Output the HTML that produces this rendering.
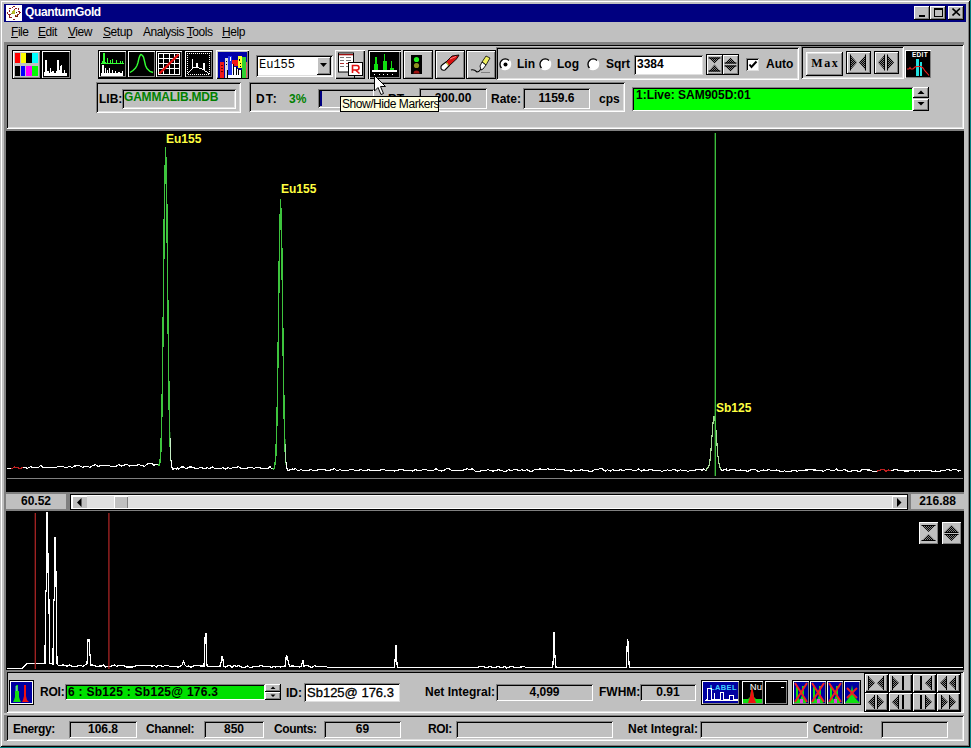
<!DOCTYPE html><html><head><meta charset="utf-8"><style>
*{margin:0;padding:0;box-sizing:border-box}
html,body{width:971px;height:748px;overflow:hidden;background:#008080}
body{position:relative;font-family:"Liberation Sans",sans-serif;font-size:12px;color:#000}
div{position:absolute;white-space:nowrap}
svg{position:absolute;display:block}
.raised{background:#c0c0c0;box-shadow:inset -1px -1px #000,inset 1px 1px #fff,inset -2px -2px #808080,inset 2px 2px #dfdfdf}
.raised1{background:#c0c0c0;box-shadow:inset -1px -1px #000,inset 1px 1px #fff,inset -2px -2px #808080}
.sunken{box-shadow:inset 1px 1px #808080,inset -1px -1px #fff,inset 2px 2px #000,inset -2px -2px #dfdfdf}
.thin{box-shadow:inset 1px 1px #808080,inset -1px -1px #fff}
.groove{box-shadow:inset 1px 1px #808080,inset -1px -1px #fff}
.b{font-weight:bold}
.lbl{font-weight:bold;font-size:12px;line-height:14px}
</style></head><body>
<div style="left:0px;top:0px;width:970px;height:747px;background:#c0c0c0;box-shadow:inset 1px 1px #c0c0c0,inset -1px -1px #000,inset 2px 2px #fff,inset -2px -2px #808080"></div>
<div style="left:4px;top:4px;width:962px;height:18px;background:#000080"></div>
<svg style="left:6px;top:5px" width="16" height="16" viewBox="0 0 16 16" shape-rendering="crispEdges"><rect width="16" height="16" fill="#fff"/><rect x="7" y="1" width="2" height="1" fill="#902020"/><rect x="6" y="2" width="1" height="1" fill="#902020"/><rect x="3" y="3" width="2" height="1" fill="#902020"/><rect x="9" y="3" width="2" height="1" fill="#902020"/><rect x="12" y="3" width="1" height="2" fill="#902020"/><rect x="3" y="5" width="1" height="2" fill="#902020"/><rect x="8" y="4" width="1" height="1" fill="#902020"/><rect x="7" y="5" width="1" height="1" fill="#902020"/><rect x="12" y="6" width="2" height="1" fill="#902020"/><rect x="13" y="7" width="2" height="1" fill="#902020"/><rect x="1" y="7" width="1" height="2" fill="#902020"/><rect x="10" y="7" width="1" height="1" fill="#301010"/><rect x="5" y="8" width="1" height="1" fill="#902020"/><rect x="13" y="8" width="1" height="1" fill="#902020"/><rect x="2" y="9" width="3" height="1" fill="#902020"/><rect x="11" y="9" width="2" height="1" fill="#902020"/><rect x="3" y="10" width="1" height="2" fill="#902020"/><rect x="3" y="12" width="3" height="1" fill="#902020"/><rect x="7" y="14" width="2" height="1" fill="#902020"/><rect x="6" y="6" width="3" height="3" fill="#b8c028"/><rect x="7" y="5" width="2" height="1" fill="#c8b840"/><rect x="5" y="8" width="2" height="1" fill="#90a030"/><rect x="9" y="10" width="3" height="2" fill="#702010"/><rect x="10" y="10" width="1" height="1" fill="#e0c040"/></svg>
<div style="left:25px;top:4px;color:#fff;font-weight:bold;font-size:12px;line-height:16px;letter-spacing:-0.38px">QuantumGold</div>
<div class="raised1" style="left:914px;top:6px;width:16px;height:14px;"></div>
<div class="raised1" style="left:930px;top:6px;width:16px;height:14px;"></div>
<div class="raised1" style="left:948px;top:6px;width:16px;height:14px;"></div>
<div style="left:919px;top:15px;width:6px;height:2px;background:#000"></div>
<div style="left:934px;top:8px;width:9px;height:9px;border:1px solid #000;border-top-width:2px"></div>
<svg style="left:952px;top:8px" width="9" height="8" viewBox="0 0 9 8"><path d="M0.5 0.5 L8 7.5 M8 0.5 L0.5 7.5" stroke="#000" stroke-width="1.6"/></svg>
<div style="left:11px;top:25px;font-size:12px;line-height:15px;letter-spacing:-0.45px"><u>F</u>ile</div>
<div style="left:38px;top:25px;font-size:12px;line-height:15px;letter-spacing:-0.45px"><u>E</u>dit</div>
<div style="left:68px;top:25px;font-size:12px;line-height:15px;letter-spacing:-0.45px"><u>V</u>iew</div>
<div style="left:103px;top:25px;font-size:12px;line-height:15px;letter-spacing:-0.45px"><u>S</u>etup</div>
<div style="left:143px;top:25px;font-size:12px;line-height:15px;letter-spacing:-0.45px">Analysis <u>T</u>ools</div>
<div style="left:222px;top:25px;font-size:12px;line-height:15px;letter-spacing:-0.45px"><u>H</u>elp</div>
<div style="left:4px;top:42px;width:960px;height:87px;box-shadow:inset 3px 3px #808080,inset -1px -1px #fff,inset 4px 4px #000,inset -2px -2px #dfdfdf"></div>
<div style="left:4px;top:129px;width:960px;height:364px;background:#000;box-shadow:inset 2px 2px #808080"></div>
<div style="left:4px;top:492px;width:960px;height:19px;background:#808080"></div>
<div style="left:6px;top:494px;width:60px;height:15px;background:#c0c0c0"></div>
<div style="left:6px;top:494px;width:60px;text-align:center;font-weight:bold;font-size:12px;line-height:15px">60.52</div>
<div style="left:70px;top:494px;width:838px;height:16px;background:#000"></div>
<div style="left:71px;top:495px;width:836px;height:14px;background:#fff"></div>
<div style="left:72px;top:496px;width:834px;height:12px;background:#e0e0e0"></div>
<div style="left:72px;top:496px;width:15px;height:12px;background:#c0c0c0;box-shadow:inset 1px 1px #fff"></div>
<div style="left:114px;top:496px;width:14px;height:12px;background:#c0c0c0;box-shadow:inset 1px 1px #fff,inset -1px 0 #808080"></div>
<div style="left:892px;top:496px;width:15px;height:12px;background:#c0c0c0;box-shadow:inset 1px 1px #fff"></div>
<svg style="left:77px;top:498px" width="5" height="9"><path d="M4.5 0 L0 4.5 L4.5 9Z" fill="#000"/></svg>
<svg style="left:897px;top:498px" width="5" height="9"><path d="M0 0 L4.5 4.5 L0 9Z" fill="#000"/></svg>
<div style="left:911px;top:494px;width:53px;height:15px;background:#c0c0c0"></div>
<div style="left:911px;top:494px;width:53px;text-align:center;font-weight:bold;font-size:12px;line-height:15px">216.88</div>
<div style="left:4px;top:510px;width:960px;height:160px;background:#000;box-shadow:inset 0 1px #808080,inset 2px 0 #808080"></div>
<div style="left:4px;top:670px;width:960px;height:43px;box-shadow:inset 3px 2px #808080,inset -1px -1px #fff,inset 4px 3px #000,inset -2px -2px #dfdfdf"></div>
<div style="left:4px;top:715px;width:960px;height:26px;box-shadow:inset 3px 1px #808080,inset -1px -1px #fff,inset 4px 2px #000,inset -2px -2px #dfdfdf"></div>
<svg width="0" height="0" style="left:0;top:0"><defs><pattern id="dotw" width="2" height="2" patternUnits="userSpaceOnUse"><rect width="1" height="1" fill="#fff"/><rect x="1" y="1" width="1" height="1" fill="#fff"/></pattern><pattern id="dith" width="2" height="2" patternUnits="userSpaceOnUse"><rect width="2" height="2" fill="#808080"/><rect width="1" height="1" fill="#000"/><rect x="1" y="1" width="1" height="1" fill="#000"/></pattern></defs></svg>
<div style="left:12px;top:50px;width:59px;height:29px;background:#000"></div>
<div style="left:13px;top:51px;width:27px;height:27px;background:#c0c0c0;box-shadow:inset 1px 1px #fff,inset -1px -1px #808080"></div>
<svg style="left:13px;top:51px" width="27" height="27" viewBox="0 0 27 27"><g shape-rendering="crispEdges"><rect x="2" y="2" width="5" height="10" fill="#f00"/><rect x="8" y="2" width="5" height="10" fill="#ff0"/><rect x="13" y="2" width="6" height="10" fill="#000"/><rect x="19" y="2" width="6" height="10" fill="#0ff"/><rect x="2" y="15" width="5" height="10" fill="#000"/><rect x="8" y="15" width="4" height="10" fill="#00f"/><rect x="13" y="15" width="6" height="10" fill="#f0f"/><rect x="19" y="15" width="6" height="10" fill="#0f0"/></g></svg>
<div style="left:42px;top:51px;width:28px;height:27px;background:#000;box-shadow:inset 1px 1px #fff,inset -1px -1px #808080"></div>
<svg style="left:42px;top:51px" width="28" height="27" viewBox="0 0 28 27"><path shape-rendering="crispEdges" d="M2 25 V21 H3 V9 H5 V20 H7 V22 H8 V17 H9 V21 H10 V20 H12 V22 H14 V20 H15 V9 H17 V19 H18 V15 H19 V14 H20 V22 H22 V19 H23 V22 H25 V25Z" fill="#fff"/></svg>
<div style="left:98px;top:50px;width:115px;height:29px;background:#000"></div>
<div style="left:99px;top:51px;width:27px;height:26px;background:#000;box-shadow:inset 1px 1px #fff,inset -1px -1px #808080"></div>
<svg style="left:99px;top:51px" width="27" height="26" viewBox="0 0 27 26"><g shape-rendering="crispEdges"><rect x="2" y="12" width="23" height="1" fill="#3f3"/><path d="M3 12 V10 H4 V2 H6 V11 H7 V12 M8 12 V7 H9 V12 M11 12 V9 H12 V12 M13 12 V8 H14 V12 M17 12 V9 H18 V12 M21 12 V10 H22 V12 M23 12 V10 H24 V12Z" fill="#3f3"/><path d="M2 25 V22 H3 V14 H5 V22 H6 V17 H7 V22 H8 V19 H9 V22 H10 V17 H11 V22 H13 V19 H14 V22 H16 V20 H17 V22 H19 V21 H21 V22 H23 V20 H24 V25Z" fill="#fff"/></g></svg>
<div style="left:128px;top:51px;width:27px;height:26px;background:#000;box-shadow:inset 1px 1px #fff,inset -1px -1px #808080"></div>
<svg style="left:128px;top:51px" width="27" height="26" viewBox="0 0 27 26"><polyline fill="none" stroke="#3f3" stroke-width="1.4" points="2,21.5 5,19.5 7.5,17 9,14.5 10,11.5 11,7 12,4.5 13,3.5 14.5,4.5 15.5,6 16.5,10 17.5,14.5 19,17.5 22,20.5 25,21.5"/></svg>
<div style="left:156px;top:51px;width:26px;height:26px;background:#000;box-shadow:inset 1px 1px #fff,inset -1px -1px #808080"></div>
<svg style="left:156px;top:51px" width="26" height="26" viewBox="0 0 26 26"><g shape-rendering="crispEdges"><rect x="2" y="2" width="1" height="22" fill="#fff"/><rect x="7" y="2" width="1" height="22" fill="#fff"/><rect x="13" y="2" width="1" height="22" fill="#fff"/><rect x="18" y="2" width="1" height="22" fill="#fff"/><rect x="23" y="2" width="1" height="22" fill="#fff"/><rect x="2" y="2" width="22" height="1" fill="#fff"/><rect x="2" y="7" width="22" height="1" fill="#fff"/><rect x="2" y="12" width="22" height="1" fill="#fff"/><rect x="2" y="17" width="22" height="1" fill="#fff"/><rect x="2" y="23" width="22" height="1" fill="#fff"/></g><path d="M3.5 22.5 L22.5 3.5" stroke="#e01010" stroke-width="2.4"/></svg>
<div style="left:185px;top:51px;width:27px;height:26px;background:#000;box-shadow:inset 1px 1px #fff,inset -1px -1px #808080"></div>
<svg style="left:185px;top:51px" width="27" height="26" viewBox="0 0 27 26"><g shape-rendering="crispEdges"><rect x="2" y="2" width="23" height="1" fill="url(#dotw)"/><rect x="2" y="23" width="23" height="1" fill="url(#dotw)"/><rect x="2" y="2" width="1" height="22" fill="url(#dotw)"/><rect x="24" y="2" width="1" height="22" fill="url(#dotw)"/><polyline fill="none" stroke="#fff" stroke-width="1" points="2.5,22.5 5.5,19.5 7.5,17.5 7.5,7.5 7.5,16.5 11.5,16.5 11.5,12.5 12.5,12.5 12.5,16.5 15.5,17.5 18.5,18.5 18.5,12.5 19.5,12.5 19.5,19.5 22.5,21.5 24.5,23.5"/></g></svg>
<div style="left:216px;top:50px;width:33px;height:29px;background:#c0c0c0;box-shadow:inset 1px 1px #fff,inset -1px -1px #000,inset -2px -2px #808080"></div>
<svg style="left:218px;top:52px" width="29" height="26" viewBox="0 0 29 26" shape-rendering="crispEdges"><rect width="29" height="26" fill="#0000a8"/><rect x="2" y="10" width="4" height="16" fill="#f01818"/><path d="M3 13 H5 M3 16 H5 M3 19 H5" stroke="#600" stroke-width="1"/><rect x="7" y="6" width="3" height="20" fill="#d8d8d8"/><rect x="8" y="9" width="1" height="1" fill="#000"/><rect x="8" y="12" width="1" height="1" fill="#000"/><rect x="10" y="4" width="4" height="20" fill="#2030e8"/><rect x="12" y="5" width="1" height="4" fill="#fff"/><rect x="14" y="8" width="6" height="6" fill="#f01818"/><rect x="20" y="4" width="4" height="12" fill="#ffff30"/><rect x="21" y="7" width="1" height="2" fill="#000"/><rect x="22" y="11" width="1" height="1" fill="#000"/><rect x="22" y="14" width="1" height="1" fill="#000"/><rect x="24" y="5" width="4" height="21" fill="#30d030"/><rect x="28" y="10" width="1" height="16" fill="#e06060"/><path d="M9 26 V18 H10 V23 H14 V12 H15 V23 H16 V15 H18 V23 H19 V17 H20 V23 H21 V18 H23 V26Z" fill="#fff"/><path d="M9.5 18 V26 M15.5 12 V23 M18.5 15 V23 M20.5 17 V23 M23.5 18 V26" stroke="#000" stroke-width="1"/></svg>
<div style="left:256px;top:55px;width:77px;height:22px;background:#fff;box-shadow:inset 1px 1px #808080,inset -1px -1px #fff,inset 2px 2px #000,inset -2px -2px #dfdfdf"></div>
<div style="left:259px;top:58px;font-family:&quot;Liberation Mono&quot;,monospace;font-size:12px;line-height:14px;letter-spacing:0px">Eu155</div>
<div class="raised1" style="left:317px;top:57px;width:14px;height:18px;"></div>
<svg style="left:320px;top:63px" width="8" height="5"><path d="M0 0 H7 L3.5 4Z" fill="#000"/></svg>
<div style="left:335px;top:50px;width:30px;height:29px;background:#c0c0c0;box-shadow:inset 1px 1px #fff,inset -1px -1px #000,inset -2px -2px #808080"></div>
<svg style="left:337px;top:52px" width="27" height="26" viewBox="0 0 27 26"><rect x="1" y="0.5" width="16" height="20" fill="#000"/><rect x="2" y="1.5" width="14" height="18" fill="#fff"/><rect x="2" y="2" width="14" height="1.3" fill="#a01010"/><path d="M3 5.5 H7 M9 5.5 H14 M3 8.5 H7 M9 8.5 H14 M3 14.5 H7 M9 14.5 H14" stroke="#7a7a7a" stroke-width="1"/><path d="M3 11.5 H7 M9 11.5 H14" stroke="#b03030" stroke-width="1"/><rect x="11" y="10" width="15" height="14" fill="#000"/><rect x="12" y="11" width="13" height="12" fill="#fff"/><path d="M15.5 21 V13.5 H20 Q22 13.5 22 15.8 Q22 18 20 18 H16 M18.5 18 L22.5 21.5" fill="none" stroke="#e01010" stroke-width="1.6"/><path d="M17.5 24 V26" stroke="#000" stroke-width="1"/></svg>
<div style="left:368px;top:50px;width:33px;height:29px;background:#000;box-shadow:inset 1px 1px #000,inset 2px 2px #fff,inset -1px -1px #000,inset -2px -2px #808080"></div>
<svg style="left:370px;top:52px" width="29" height="25" viewBox="0 0 29 25" shape-rendering="crispEdges"><path d="M4 19 V12 H5 V5 H7 V12 H8 V19Z M13 19 V9 H14 V2 H15 V9 H17 V19Z M20 19 V16 H21 V9 H22 V16 H24 V19Z" fill="#10e010"/><rect x="2" y="18" width="25" height="2" fill="#fff"/><path d="M4 22.5 H5 M9 22.5 H10 M13 22.5 H14 M17 22.5 H18 M22 22.5 H23" stroke="#fff" stroke-width="1"/></svg>
<div style="left:403px;top:50px;width:30px;height:29px;background:#c0c0c0;box-shadow:inset 1px 1px #000,inset -1px -1px #000,inset 2px 2px #fff,inset -2px -2px #808080"></div>
<svg style="left:405px;top:52px" width="26" height="25" viewBox="0 0 26 25"><rect x="6" y="3" width="11" height="19" fill="#000"/><circle cx="11.5" cy="7.5" r="2.6" fill="#20f020"/><circle cx="11.5" cy="13.5" r="2.6" fill="#909020"/><path d="M8.5 21.5 A3 3 0 0 1 14.5 21.5Z" fill="#a01010"/></svg>
<div style="left:435px;top:50px;width:30px;height:29px;background:#c0c0c0;box-shadow:inset 1px 1px #000,inset -1px -1px #000,inset 2px 2px #fff,inset -2px -2px #808080"></div>
<svg style="left:437px;top:52px" width="26" height="25" viewBox="0 0 26 25"><path d="M9 10 L15 4 L22 3 L20 6.5 L12 14Z" fill="#d81010" stroke="#000" stroke-width="0.9"/><path d="M13 7 L19 4.5" stroke="#ff9090" stroke-width="0.9"/><path d="M9 10 L12 14 L8 18 Q5 19 4 16.5 Q3.5 14 5 13Z" fill="#fff" stroke="#000" stroke-width="1.1"/><path d="M9.5 10.5 L11.5 13.5" stroke="#e8e040" stroke-width="1.2"/></svg>
<div style="left:466px;top:50px;width:30px;height:29px;background:#c0c0c0;box-shadow:inset 1px 1px #000,inset -1px -1px #000,inset 2px 2px #fff,inset -2px -2px #808080"></div>
<svg style="left:468px;top:52px" width="26" height="25" viewBox="0 0 26 25"><path d="M14 10 L18 4 L22 6 L18 13 Z" fill="#f0f060" stroke="#000" stroke-width="0.8"/><path d="M12 14 L14 10 L18 13 L15 17 L13 18Z" fill="#fff" stroke="#000" stroke-width="0.9"/><path d="M3 18 Q6 17 9 20 Q11 20 13 17" fill="none" stroke="#000" stroke-width="1.1"/><path d="M13 20.5 H22" stroke="#808080" stroke-width="1"/></svg>
<div style="left:496px;top:47px;width:303px;height:33px;box-shadow:inset 1px 1px #808080,inset -1px -1px #fff,inset 2px 2px #000,inset -2px -2px #dfdfdf"></div>
<svg style="left:499px;top:58px" width="13" height="13" viewBox="0 0 13 13"><circle cx="6.5" cy="6.5" r="5" fill="#fff"/><path d="M2.3 10.2 A5.6 5.6 0 0 0 10.2 2.3" stroke="#fff" fill="none" stroke-width="1.4"/><path d="M2.5 10 A5 5 0 0 1 10 2.5" stroke="#000" fill="none" stroke-width="1.3"/><circle cx="6.5" cy="6.5" r="2" fill="#000"/></svg>
<svg style="left:539px;top:58px" width="13" height="13" viewBox="0 0 13 13"><circle cx="6.5" cy="6.5" r="5" fill="#fff"/><path d="M2.3 10.2 A5.6 5.6 0 0 0 10.2 2.3" stroke="#fff" fill="none" stroke-width="1.4"/><path d="M2.5 10 A5 5 0 0 1 10 2.5" stroke="#000" fill="none" stroke-width="1.3"/></svg>
<svg style="left:587px;top:58px" width="13" height="13" viewBox="0 0 13 13"><circle cx="6.5" cy="6.5" r="5" fill="#fff"/><path d="M2.3 10.2 A5.6 5.6 0 0 0 10.2 2.3" stroke="#fff" fill="none" stroke-width="1.4"/><path d="M2.5 10 A5 5 0 0 1 10 2.5" stroke="#000" fill="none" stroke-width="1.3"/></svg>
<div style="left:517px;top:56px;font-weight:bold;font-size:12px;line-height:16px">Lin</div>
<div style="left:557px;top:56px;font-weight:bold;font-size:12px;line-height:16px">Log</div>
<div style="left:606px;top:56px;font-weight:bold;font-size:12px;line-height:16px">Sqrt</div>
<div style="left:634px;top:55px;width:69px;height:20px;background:#fff;box-shadow:inset 1px 1px #808080,inset -1px -1px #dfdfdf,inset 2px 2px #000"></div>
<div style="left:637px;top:56px;font-weight:bold;font-size:12px;line-height:16px">3384</div>
<div style="left:706px;top:54px;width:33px;height:21px;background:#000"></div>
<div style="left:707px;top:55px;width:15px;height:19px;background:#c0c0c0;box-shadow:inset 1px 1px #fff,inset -1px -1px #808080"></div>
<div style="left:723px;top:55px;width:15px;height:19px;background:#c0c0c0;box-shadow:inset 1px 1px #fff,inset -1px -1px #808080"></div>
<svg style="left:707px;top:55px" width="32" height="19" viewBox="0 0 32 19"><path d="M1.5 2.5 H13.5 L7.5 8.5Z M7.5 9.5 L13.5 16.5 H1.5Z" fill="url(#dith)"/><path d="M1.5 3 H13.5 M1.5 16 H13.5" stroke="#000"/><path d="M17.5 8.5 L23.5 2.5 L29.5 8.5Z M17.5 10.5 H29.5 L23.5 16.5Z" fill="url(#dith)"/><path d="M17.5 8 H29.5 M17.5 11 H29.5" stroke="#000"/></svg>
<div style="left:746px;top:58px;width:13px;height:13px;background:#fff;box-shadow:inset 1px 1px #808080,inset -1px -1px #dfdfdf,inset 2px 2px #000"></div>
<svg style="left:748px;top:60px" width="10" height="10"><path d="M1.5 4.5 L3.5 7 L8.5 1.5" fill="none" stroke="#000" stroke-width="2"/></svg>
<div style="left:766px;top:56px;font-weight:bold;font-size:12px;line-height:16px">Auto</div>
<div style="left:801px;top:46px;width:103px;height:33px;box-shadow:inset 1px 1px #808080,inset -1px -1px #fff,inset 2px 2px #000,inset -2px -2px #dfdfdf"></div>
<div class="raised" style="left:806px;top:52px;width:37px;height:24px;"></div>
<div style="left:806px;top:55px;width:37px;text-align:center;font-family:&quot;Liberation Serif&quot;,serif;font-weight:bold;font-size:12px;line-height:16px;letter-spacing:1.6px;text-indent:1.6px">Max</div>
<div style="left:846px;top:51px;width:25px;height:23px;background:#c0c0c0;box-shadow:inset 1px 1px #000,inset -1px -1px #000,inset 2px 2px #fff,inset -2px -2px #808080"></div>
<div style="left:874px;top:51px;width:25px;height:23px;background:#c0c0c0;box-shadow:inset 1px 1px #000,inset -1px -1px #000,inset 2px 2px #fff,inset -2px -2px #808080"></div>
<svg style="left:846px;top:51px" width="53" height="23" viewBox="0 0 53 23"><path d="M4 3.5 L11 11.5 L4 19.5Z M20 3.5 L13 11.5 L20 19.5Z" fill="url(#dith)"/><path d="M4.5 3.5 V19.5 M19.5 3.5 V19.5" stroke="#000"/><path d="M39 3.5 L32 11.5 L39 19.5Z M41 3.5 L48 11.5 L41 19.5Z" fill="url(#dith)"/><path d="M38.5 3.5 V19.5 M41.5 3.5 V19.5" stroke="#000"/></svg>
<div style="left:905px;top:50px;width:26px;height:28px;background:#000;box-shadow:inset 1px 1px #fff,inset -1px -1px #808080"></div>
<svg style="left:905px;top:50px" width="26" height="28" viewBox="0 0 26 28"><text x="23" y="7" text-anchor="end" font-family="Liberation Sans" font-weight="bold" font-size="6.5" fill="#fff" letter-spacing="0.3">EDIT</text><rect x="11" y="9" width="3" height="17" fill="#20e0e0"/><rect x="15" y="12" width="2" height="14" fill="#20e0e0"/><polyline fill="none" stroke="#f02020" stroke-width="1.1" points="2,19 4,19 5,17.5 6,19 8,19 10,17 12,16.5 16,16.5 18,18 20,21 22,23 24,25.5"/></svg>
<div style="left:96px;top:82px;width:145px;height:31px;box-shadow:inset 1px 1px #808080,inset -1px -1px #fff,inset 2px 2px #000,inset -2px -2px #dfdfdf"></div>
<div style="left:99px;top:92px;font-weight:bold;font-size:12px;line-height:15px">LIB:</div>
<div style="left:122px;top:89px;width:114px;height:20px;box-shadow:inset 1px 1px #808080,inset -1px -1px #fff,inset 2px 2px #000,inset -2px -2px #dfdfdf"></div>
<div style="left:124px;top:90px;color:#008000;font-weight:bold;font-size:12px;line-height:15px;letter-spacing:-0.2px">GAMMALIB.MDB</div>
<div style="left:249px;top:82px;width:376px;height:30px;box-shadow:inset 1px 1px #808080,inset -1px -1px #fff,inset 2px 2px #000,inset -2px -2px #dfdfdf"></div>
<div style="left:256px;top:92px;font-weight:bold;font-size:12px;line-height:15px;letter-spacing:1px">DT:</div>
<div style="left:289px;top:92px;color:#008000;font-weight:bold;font-size:12px;line-height:15px">3%</div>
<div style="left:318px;top:89px;width:56px;height:19px;box-shadow:inset 1px 1px #808080,inset -1px -1px #fff,inset 2px 2px #000"></div>
<div style="left:320px;top:91px;width:2px;height:15px;background:#000080"></div>
<div style="left:388px;top:92px;font-weight:bold;font-size:12px;line-height:15px">RT:</div>
<div style="left:419px;top:88px;width:68px;height:21px;box-shadow:inset 1px 1px #808080,inset -1px -1px #fff,inset 2px 2px #000"></div>
<div style="left:419px;top:90px;width:68px;text-align:center;font-weight:bold;font-size:12px;line-height:16px">200.00</div>
<div style="left:491px;top:92px;font-weight:bold;font-size:12px;line-height:15px">Rate:</div>
<div style="left:523px;top:88px;width:67px;height:21px;box-shadow:inset 1px 1px #808080,inset -1px -1px #fff,inset 2px 2px #000"></div>
<div style="left:523px;top:90px;width:67px;text-align:center;font-weight:bold;font-size:12px;line-height:16px">1159.6</div>
<div style="left:599px;top:92px;font-weight:bold;font-size:12px;line-height:15px">cps</div>
<div style="left:632px;top:87px;width:281px;height:24px;background:#00ff00;box-shadow:inset 1px 1px #808080,inset -1px -1px #fff,inset 2px 2px #000"></div>
<div style="left:636px;top:88px;font-weight:bold;font-size:12px;line-height:14px">1:Live: SAM905D:01</div>
<div class="raised1" style="left:913px;top:87px;width:16px;height:11px;"></div>
<div class="raised1" style="left:913px;top:99px;width:16px;height:12px;"></div>
<svg style="left:917px;top:90px" width="8" height="20"><path d="M0.5 4 H7.5 L4 0.5Z M0.5 12 H7.5 L4 15.5Z" fill="#000"/></svg>
<div style="left:340px;top:96px;width:99px;height:16px;background:#ffffe1;border:1px solid #000"></div>
<div style="left:342px;top:97px;font-size:12px;line-height:14px;letter-spacing:-0.45px">Show/Hide Markers</div>
<svg style="left:374px;top:75px" width="14" height="22" viewBox="0 0 14 22"><path d="M0.5 0.5 V16 L4 12.5 L7 19.5 L9.5 18.5 L6.5 11.5 H11.5Z" fill="#fff" stroke="#000" stroke-width="1"/></svg>
<svg style="left:0;top:0" width="971" height="748" viewBox="0 0 971 748" shape-rendering="crispEdges">
<path d="M7 478.5 H963" stroke="#808080" stroke-width="1.2"/>
<defs><clipPath id="c1"><rect x="158" y="131" width="12.3" height="350"/></clipPath><clipPath id="c2"><rect x="272.5" y="131" width="13" height="350"/></clipPath><clipPath id="c3"><rect x="706" y="131" width="15" height="350"/></clipPath><clipPath id="r1"><rect x="11" y="131" width="12" height="350"/></clipPath><clipPath id="r2"><rect x="877" y="131" width="14" height="350"/></clipPath></defs>
<polyline fill="none" stroke="#ffffff" stroke-width="1.1" points="7.0,468.5 9.6,468.5 12.2,468.5 14.8,467.0 17.4,467.8 20.0,468.3 22.6,467.7 25.2,467.7 27.8,468.2 30.4,466.7 33.0,467.6 35.6,467.5 38.2,467.5 40.8,465.6 43.4,467.9 46.0,467.4 48.6,467.3 51.2,467.3 53.8,467.2 56.4,467.2 59.0,466.2 61.6,466.2 64.2,467.1 66.8,467.6 69.4,466.1 72.0,467.5 74.6,466.0 77.2,465.9 79.8,465.9 82.4,467.3 85.0,466.7 87.6,466.7 90.2,467.2 92.8,465.7 95.4,464.7 98.0,466.5 100.6,465.6 103.2,465.5 105.8,465.5 108.4,465.4 111.0,466.3 113.6,466.2 116.2,466.2 118.8,464.4 121.4,466.1 124.0,465.2 126.6,464.2 129.2,466.0 131.8,465.9 134.4,465.9 137.0,465.0 139.6,464.9 142.2,465.8 144.8,466.3 147.4,463.9 150.0,463.8 152.6,463.8 153.6,465.6 154.8,464.7 156.0,464.6 157.2,464.6 158.4,465.2 159.6,465.3 160.8,452.5 162.0,410.4 163.2,318.0 164.4,202.5 165.6,147.0 166.8,202.5 168.0,318.0 169.2,410.4 170.4,453.4 171.6,466.6 172.8,469.1 174.0,468.9 175.2,468.0 176.4,469.4 177.6,468.0 178.6,468.9 181.2,467.0 183.8,467.0 186.4,468.8 189.0,467.0 191.6,467.0 194.2,467.9 196.8,468.7 199.4,467.8 202.0,467.8 204.6,468.7 207.2,467.8 209.8,468.6 212.4,466.8 215.0,468.6 217.6,468.6 220.2,468.6 222.8,467.7 225.4,469.1 228.0,467.6 230.6,468.5 233.2,467.6 235.8,467.6 238.4,466.6 241.0,468.4 243.6,468.4 246.2,468.4 248.8,467.5 251.4,467.5 254.0,468.3 256.6,467.4 259.2,467.4 261.8,468.8 264.4,468.3 267.0,468.8 268.6,468.2 269.8,466.4 271.0,468.2 272.2,468.2 273.4,469.2 274.6,467.1 275.8,456.4 277.0,420.1 278.2,343.1 279.4,245.8 280.6,199.0 281.8,245.8 283.0,343.1 284.2,419.2 285.4,457.3 286.6,468.0 287.8,470.1 289.0,470.4 290.2,469.5 291.4,469.5 292.6,468.6 293.0,469.5 295.6,468.6 298.2,471.0 300.8,469.5 303.4,470.4 306.0,470.4 308.6,470.4 311.2,469.5 313.8,471.0 316.4,470.4 319.0,469.5 321.6,469.5 324.2,469.5 326.8,470.4 329.4,470.4 332.0,469.5 334.6,468.6 337.2,471.0 339.8,469.5 342.4,470.4 345.0,470.4 347.6,470.5 350.2,469.6 352.8,469.6 355.4,470.5 358.0,470.5 360.6,469.6 363.2,470.5 365.8,471.0 368.4,469.6 371.0,470.5 373.6,470.5 376.2,470.5 378.8,471.0 381.4,469.6 384.0,469.6 386.6,470.5 389.2,470.5 391.8,470.5 394.4,471.0 397.0,470.5 399.6,469.6 402.2,469.6 404.8,470.5 407.4,470.5 410.0,470.5 412.6,471.0 415.2,469.6 417.8,470.5 420.4,470.5 423.0,469.6 425.6,469.6 428.2,470.5 430.8,471.0 433.4,470.5 436.0,468.7 438.6,470.5 441.2,471.1 443.8,470.5 446.4,468.7 449.0,468.7 451.6,470.5 454.2,470.5 456.8,470.5 459.4,470.5 462.0,470.5 464.6,469.6 467.2,468.7 469.8,469.6 472.4,468.7 475.0,471.1 477.6,471.1 480.2,471.1 482.8,470.5 485.4,470.5 488.0,469.6 490.6,470.6 493.2,471.1 495.8,470.6 498.4,469.7 501.0,470.6 503.6,471.1 506.2,471.1 508.8,469.7 511.4,470.6 514.0,469.7 516.6,469.7 519.2,470.6 521.8,469.7 524.4,470.6 527.0,469.7 529.6,471.1 532.2,471.1 534.8,469.7 537.4,469.7 540.0,468.8 542.6,469.7 545.2,469.7 547.8,468.8 550.4,469.7 553.0,469.7 555.6,468.8 558.2,469.7 560.8,469.7 563.4,469.7 566.0,470.6 568.6,470.6 571.2,471.1 573.8,469.7 576.4,470.6 579.0,470.6 581.6,469.7 584.2,470.6 586.8,470.6 589.4,471.2 592.0,471.2 594.6,469.7 597.2,469.7 599.8,468.8 602.4,468.8 605.0,471.2 607.6,469.7 610.2,471.2 612.8,469.7 615.4,470.6 618.0,470.6 620.6,469.7 623.2,470.6 625.8,469.7 628.4,469.7 631.0,469.7 633.6,470.6 636.2,470.7 638.8,468.9 641.4,471.2 644.0,469.8 646.6,470.7 649.2,469.8 651.8,469.8 654.4,470.7 657.0,470.7 659.6,470.7 662.2,471.2 664.8,470.7 667.4,469.8 670.0,470.7 672.6,469.8 675.2,469.8 677.8,471.2 680.4,469.8 683.0,470.7 685.6,470.7 688.2,471.2 690.8,470.7 693.4,470.7 696.0,469.8 698.6,469.8 701.2,469.8 702.2,470.7 703.4,468.9 704.6,469.8 705.8,470.6 707.0,468.6 708.2,467.2 709.4,464.6 710.6,455.2 711.8,439.0 713.0,423.0 714.2,416.0 715.4,423.0 716.6,439.0 717.8,455.2 719.0,463.7 720.2,468.1 721.4,470.4 722.6,470.7 723.8,469.9 725.0,469.9 726.2,469.0 727.2,470.8 729.8,469.9 732.4,469.9 735.0,469.9 737.6,470.8 740.2,469.9 742.8,470.8 745.4,470.8 748.0,471.4 750.6,469.9 753.2,469.0 755.8,469.9 758.4,471.4 761.0,470.8 763.6,469.9 766.2,470.8 768.8,469.0 771.4,470.9 774.0,470.9 776.6,470.0 779.2,470.9 781.8,471.4 784.4,470.9 787.0,471.4 789.6,471.4 792.2,470.9 794.8,470.0 797.4,471.4 800.0,470.0 802.6,470.9 805.2,470.0 807.8,470.0 810.4,469.1 813.0,470.0 815.6,470.0 818.2,470.9 820.8,470.0 823.4,471.4 826.0,470.0 828.6,469.1 831.2,470.9 833.8,470.9 836.4,469.1 839.0,470.9 841.6,470.9 844.2,469.1 846.8,470.9 849.4,471.5 852.0,470.9 854.6,470.9 857.2,470.9 859.8,471.5 862.4,469.1 865.0,469.1 867.6,470.0 870.2,470.0 872.8,471.5 875.4,471.5 878.0,470.9 880.6,470.0 883.2,469.1 885.8,471.5 888.4,470.0 891.0,470.9 893.6,470.0 896.2,469.1 898.8,471.0 901.4,470.1 904.0,471.0 906.6,471.0 909.2,471.0 911.8,470.1 914.4,471.0 917.0,470.1 919.6,471.0 922.2,470.1 924.8,470.1 927.4,470.1 930.0,470.1 932.6,471.5 935.2,471.0 937.8,471.5 940.4,471.0 943.0,470.1 945.6,470.1 948.2,469.2 950.8,471.0 953.4,469.2 956.0,469.2 958.6,471.0 961.2,470.1"/>
<polyline fill="none" stroke="#3ec43e" stroke-width="1.4" clip-path="url(#c1)" points="7.0,468.5 9.6,468.5 12.2,468.5 14.8,467.0 17.4,467.8 20.0,468.3 22.6,467.7 25.2,467.7 27.8,468.2 30.4,466.7 33.0,467.6 35.6,467.5 38.2,467.5 40.8,465.6 43.4,467.9 46.0,467.4 48.6,467.3 51.2,467.3 53.8,467.2 56.4,467.2 59.0,466.2 61.6,466.2 64.2,467.1 66.8,467.6 69.4,466.1 72.0,467.5 74.6,466.0 77.2,465.9 79.8,465.9 82.4,467.3 85.0,466.7 87.6,466.7 90.2,467.2 92.8,465.7 95.4,464.7 98.0,466.5 100.6,465.6 103.2,465.5 105.8,465.5 108.4,465.4 111.0,466.3 113.6,466.2 116.2,466.2 118.8,464.4 121.4,466.1 124.0,465.2 126.6,464.2 129.2,466.0 131.8,465.9 134.4,465.9 137.0,465.0 139.6,464.9 142.2,465.8 144.8,466.3 147.4,463.9 150.0,463.8 152.6,463.8 153.6,465.6 154.8,464.7 156.0,464.6 157.2,464.6 158.4,465.2 159.6,465.3 160.8,452.5 162.0,410.4 163.2,318.0 164.4,202.5 165.6,147.0 166.8,202.5 168.0,318.0 169.2,410.4 170.4,453.4 171.6,466.6 172.8,469.1 174.0,468.9 175.2,468.0 176.4,469.4 177.6,468.0 178.6,468.9 181.2,467.0 183.8,467.0 186.4,468.8 189.0,467.0 191.6,467.0 194.2,467.9 196.8,468.7 199.4,467.8 202.0,467.8 204.6,468.7 207.2,467.8 209.8,468.6 212.4,466.8 215.0,468.6 217.6,468.6 220.2,468.6 222.8,467.7 225.4,469.1 228.0,467.6 230.6,468.5 233.2,467.6 235.8,467.6 238.4,466.6 241.0,468.4 243.6,468.4 246.2,468.4 248.8,467.5 251.4,467.5 254.0,468.3 256.6,467.4 259.2,467.4 261.8,468.8 264.4,468.3 267.0,468.8 268.6,468.2 269.8,466.4 271.0,468.2 272.2,468.2 273.4,469.2 274.6,467.1 275.8,456.4 277.0,420.1 278.2,343.1 279.4,245.8 280.6,199.0 281.8,245.8 283.0,343.1 284.2,419.2 285.4,457.3 286.6,468.0 287.8,470.1 289.0,470.4 290.2,469.5 291.4,469.5 292.6,468.6 293.0,469.5 295.6,468.6 298.2,471.0 300.8,469.5 303.4,470.4 306.0,470.4 308.6,470.4 311.2,469.5 313.8,471.0 316.4,470.4 319.0,469.5 321.6,469.5 324.2,469.5 326.8,470.4 329.4,470.4 332.0,469.5 334.6,468.6 337.2,471.0 339.8,469.5 342.4,470.4 345.0,470.4 347.6,470.5 350.2,469.6 352.8,469.6 355.4,470.5 358.0,470.5 360.6,469.6 363.2,470.5 365.8,471.0 368.4,469.6 371.0,470.5 373.6,470.5 376.2,470.5 378.8,471.0 381.4,469.6 384.0,469.6 386.6,470.5 389.2,470.5 391.8,470.5 394.4,471.0 397.0,470.5 399.6,469.6 402.2,469.6 404.8,470.5 407.4,470.5 410.0,470.5 412.6,471.0 415.2,469.6 417.8,470.5 420.4,470.5 423.0,469.6 425.6,469.6 428.2,470.5 430.8,471.0 433.4,470.5 436.0,468.7 438.6,470.5 441.2,471.1 443.8,470.5 446.4,468.7 449.0,468.7 451.6,470.5 454.2,470.5 456.8,470.5 459.4,470.5 462.0,470.5 464.6,469.6 467.2,468.7 469.8,469.6 472.4,468.7 475.0,471.1 477.6,471.1 480.2,471.1 482.8,470.5 485.4,470.5 488.0,469.6 490.6,470.6 493.2,471.1 495.8,470.6 498.4,469.7 501.0,470.6 503.6,471.1 506.2,471.1 508.8,469.7 511.4,470.6 514.0,469.7 516.6,469.7 519.2,470.6 521.8,469.7 524.4,470.6 527.0,469.7 529.6,471.1 532.2,471.1 534.8,469.7 537.4,469.7 540.0,468.8 542.6,469.7 545.2,469.7 547.8,468.8 550.4,469.7 553.0,469.7 555.6,468.8 558.2,469.7 560.8,469.7 563.4,469.7 566.0,470.6 568.6,470.6 571.2,471.1 573.8,469.7 576.4,470.6 579.0,470.6 581.6,469.7 584.2,470.6 586.8,470.6 589.4,471.2 592.0,471.2 594.6,469.7 597.2,469.7 599.8,468.8 602.4,468.8 605.0,471.2 607.6,469.7 610.2,471.2 612.8,469.7 615.4,470.6 618.0,470.6 620.6,469.7 623.2,470.6 625.8,469.7 628.4,469.7 631.0,469.7 633.6,470.6 636.2,470.7 638.8,468.9 641.4,471.2 644.0,469.8 646.6,470.7 649.2,469.8 651.8,469.8 654.4,470.7 657.0,470.7 659.6,470.7 662.2,471.2 664.8,470.7 667.4,469.8 670.0,470.7 672.6,469.8 675.2,469.8 677.8,471.2 680.4,469.8 683.0,470.7 685.6,470.7 688.2,471.2 690.8,470.7 693.4,470.7 696.0,469.8 698.6,469.8 701.2,469.8 702.2,470.7 703.4,468.9 704.6,469.8 705.8,470.6 707.0,468.6 708.2,467.2 709.4,464.6 710.6,455.2 711.8,439.0 713.0,423.0 714.2,416.0 715.4,423.0 716.6,439.0 717.8,455.2 719.0,463.7 720.2,468.1 721.4,470.4 722.6,470.7 723.8,469.9 725.0,469.9 726.2,469.0 727.2,470.8 729.8,469.9 732.4,469.9 735.0,469.9 737.6,470.8 740.2,469.9 742.8,470.8 745.4,470.8 748.0,471.4 750.6,469.9 753.2,469.0 755.8,469.9 758.4,471.4 761.0,470.8 763.6,469.9 766.2,470.8 768.8,469.0 771.4,470.9 774.0,470.9 776.6,470.0 779.2,470.9 781.8,471.4 784.4,470.9 787.0,471.4 789.6,471.4 792.2,470.9 794.8,470.0 797.4,471.4 800.0,470.0 802.6,470.9 805.2,470.0 807.8,470.0 810.4,469.1 813.0,470.0 815.6,470.0 818.2,470.9 820.8,470.0 823.4,471.4 826.0,470.0 828.6,469.1 831.2,470.9 833.8,470.9 836.4,469.1 839.0,470.9 841.6,470.9 844.2,469.1 846.8,470.9 849.4,471.5 852.0,470.9 854.6,470.9 857.2,470.9 859.8,471.5 862.4,469.1 865.0,469.1 867.6,470.0 870.2,470.0 872.8,471.5 875.4,471.5 878.0,470.9 880.6,470.0 883.2,469.1 885.8,471.5 888.4,470.0 891.0,470.9 893.6,470.0 896.2,469.1 898.8,471.0 901.4,470.1 904.0,471.0 906.6,471.0 909.2,471.0 911.8,470.1 914.4,471.0 917.0,470.1 919.6,471.0 922.2,470.1 924.8,470.1 927.4,470.1 930.0,470.1 932.6,471.5 935.2,471.0 937.8,471.5 940.4,471.0 943.0,470.1 945.6,470.1 948.2,469.2 950.8,471.0 953.4,469.2 956.0,469.2 958.6,471.0 961.2,470.1"/>
<polyline fill="none" stroke="#3ec43e" stroke-width="1.4" clip-path="url(#c2)" points="7.0,468.5 9.6,468.5 12.2,468.5 14.8,467.0 17.4,467.8 20.0,468.3 22.6,467.7 25.2,467.7 27.8,468.2 30.4,466.7 33.0,467.6 35.6,467.5 38.2,467.5 40.8,465.6 43.4,467.9 46.0,467.4 48.6,467.3 51.2,467.3 53.8,467.2 56.4,467.2 59.0,466.2 61.6,466.2 64.2,467.1 66.8,467.6 69.4,466.1 72.0,467.5 74.6,466.0 77.2,465.9 79.8,465.9 82.4,467.3 85.0,466.7 87.6,466.7 90.2,467.2 92.8,465.7 95.4,464.7 98.0,466.5 100.6,465.6 103.2,465.5 105.8,465.5 108.4,465.4 111.0,466.3 113.6,466.2 116.2,466.2 118.8,464.4 121.4,466.1 124.0,465.2 126.6,464.2 129.2,466.0 131.8,465.9 134.4,465.9 137.0,465.0 139.6,464.9 142.2,465.8 144.8,466.3 147.4,463.9 150.0,463.8 152.6,463.8 153.6,465.6 154.8,464.7 156.0,464.6 157.2,464.6 158.4,465.2 159.6,465.3 160.8,452.5 162.0,410.4 163.2,318.0 164.4,202.5 165.6,147.0 166.8,202.5 168.0,318.0 169.2,410.4 170.4,453.4 171.6,466.6 172.8,469.1 174.0,468.9 175.2,468.0 176.4,469.4 177.6,468.0 178.6,468.9 181.2,467.0 183.8,467.0 186.4,468.8 189.0,467.0 191.6,467.0 194.2,467.9 196.8,468.7 199.4,467.8 202.0,467.8 204.6,468.7 207.2,467.8 209.8,468.6 212.4,466.8 215.0,468.6 217.6,468.6 220.2,468.6 222.8,467.7 225.4,469.1 228.0,467.6 230.6,468.5 233.2,467.6 235.8,467.6 238.4,466.6 241.0,468.4 243.6,468.4 246.2,468.4 248.8,467.5 251.4,467.5 254.0,468.3 256.6,467.4 259.2,467.4 261.8,468.8 264.4,468.3 267.0,468.8 268.6,468.2 269.8,466.4 271.0,468.2 272.2,468.2 273.4,469.2 274.6,467.1 275.8,456.4 277.0,420.1 278.2,343.1 279.4,245.8 280.6,199.0 281.8,245.8 283.0,343.1 284.2,419.2 285.4,457.3 286.6,468.0 287.8,470.1 289.0,470.4 290.2,469.5 291.4,469.5 292.6,468.6 293.0,469.5 295.6,468.6 298.2,471.0 300.8,469.5 303.4,470.4 306.0,470.4 308.6,470.4 311.2,469.5 313.8,471.0 316.4,470.4 319.0,469.5 321.6,469.5 324.2,469.5 326.8,470.4 329.4,470.4 332.0,469.5 334.6,468.6 337.2,471.0 339.8,469.5 342.4,470.4 345.0,470.4 347.6,470.5 350.2,469.6 352.8,469.6 355.4,470.5 358.0,470.5 360.6,469.6 363.2,470.5 365.8,471.0 368.4,469.6 371.0,470.5 373.6,470.5 376.2,470.5 378.8,471.0 381.4,469.6 384.0,469.6 386.6,470.5 389.2,470.5 391.8,470.5 394.4,471.0 397.0,470.5 399.6,469.6 402.2,469.6 404.8,470.5 407.4,470.5 410.0,470.5 412.6,471.0 415.2,469.6 417.8,470.5 420.4,470.5 423.0,469.6 425.6,469.6 428.2,470.5 430.8,471.0 433.4,470.5 436.0,468.7 438.6,470.5 441.2,471.1 443.8,470.5 446.4,468.7 449.0,468.7 451.6,470.5 454.2,470.5 456.8,470.5 459.4,470.5 462.0,470.5 464.6,469.6 467.2,468.7 469.8,469.6 472.4,468.7 475.0,471.1 477.6,471.1 480.2,471.1 482.8,470.5 485.4,470.5 488.0,469.6 490.6,470.6 493.2,471.1 495.8,470.6 498.4,469.7 501.0,470.6 503.6,471.1 506.2,471.1 508.8,469.7 511.4,470.6 514.0,469.7 516.6,469.7 519.2,470.6 521.8,469.7 524.4,470.6 527.0,469.7 529.6,471.1 532.2,471.1 534.8,469.7 537.4,469.7 540.0,468.8 542.6,469.7 545.2,469.7 547.8,468.8 550.4,469.7 553.0,469.7 555.6,468.8 558.2,469.7 560.8,469.7 563.4,469.7 566.0,470.6 568.6,470.6 571.2,471.1 573.8,469.7 576.4,470.6 579.0,470.6 581.6,469.7 584.2,470.6 586.8,470.6 589.4,471.2 592.0,471.2 594.6,469.7 597.2,469.7 599.8,468.8 602.4,468.8 605.0,471.2 607.6,469.7 610.2,471.2 612.8,469.7 615.4,470.6 618.0,470.6 620.6,469.7 623.2,470.6 625.8,469.7 628.4,469.7 631.0,469.7 633.6,470.6 636.2,470.7 638.8,468.9 641.4,471.2 644.0,469.8 646.6,470.7 649.2,469.8 651.8,469.8 654.4,470.7 657.0,470.7 659.6,470.7 662.2,471.2 664.8,470.7 667.4,469.8 670.0,470.7 672.6,469.8 675.2,469.8 677.8,471.2 680.4,469.8 683.0,470.7 685.6,470.7 688.2,471.2 690.8,470.7 693.4,470.7 696.0,469.8 698.6,469.8 701.2,469.8 702.2,470.7 703.4,468.9 704.6,469.8 705.8,470.6 707.0,468.6 708.2,467.2 709.4,464.6 710.6,455.2 711.8,439.0 713.0,423.0 714.2,416.0 715.4,423.0 716.6,439.0 717.8,455.2 719.0,463.7 720.2,468.1 721.4,470.4 722.6,470.7 723.8,469.9 725.0,469.9 726.2,469.0 727.2,470.8 729.8,469.9 732.4,469.9 735.0,469.9 737.6,470.8 740.2,469.9 742.8,470.8 745.4,470.8 748.0,471.4 750.6,469.9 753.2,469.0 755.8,469.9 758.4,471.4 761.0,470.8 763.6,469.9 766.2,470.8 768.8,469.0 771.4,470.9 774.0,470.9 776.6,470.0 779.2,470.9 781.8,471.4 784.4,470.9 787.0,471.4 789.6,471.4 792.2,470.9 794.8,470.0 797.4,471.4 800.0,470.0 802.6,470.9 805.2,470.0 807.8,470.0 810.4,469.1 813.0,470.0 815.6,470.0 818.2,470.9 820.8,470.0 823.4,471.4 826.0,470.0 828.6,469.1 831.2,470.9 833.8,470.9 836.4,469.1 839.0,470.9 841.6,470.9 844.2,469.1 846.8,470.9 849.4,471.5 852.0,470.9 854.6,470.9 857.2,470.9 859.8,471.5 862.4,469.1 865.0,469.1 867.6,470.0 870.2,470.0 872.8,471.5 875.4,471.5 878.0,470.9 880.6,470.0 883.2,469.1 885.8,471.5 888.4,470.0 891.0,470.9 893.6,470.0 896.2,469.1 898.8,471.0 901.4,470.1 904.0,471.0 906.6,471.0 909.2,471.0 911.8,470.1 914.4,471.0 917.0,470.1 919.6,471.0 922.2,470.1 924.8,470.1 927.4,470.1 930.0,470.1 932.6,471.5 935.2,471.0 937.8,471.5 940.4,471.0 943.0,470.1 945.6,470.1 948.2,469.2 950.8,471.0 953.4,469.2 956.0,469.2 958.6,471.0 961.2,470.1"/>
<polyline fill="none" stroke="#a8d898" stroke-width="1.2" clip-path="url(#c3)" points="7.0,468.5 9.6,468.5 12.2,468.5 14.8,467.0 17.4,467.8 20.0,468.3 22.6,467.7 25.2,467.7 27.8,468.2 30.4,466.7 33.0,467.6 35.6,467.5 38.2,467.5 40.8,465.6 43.4,467.9 46.0,467.4 48.6,467.3 51.2,467.3 53.8,467.2 56.4,467.2 59.0,466.2 61.6,466.2 64.2,467.1 66.8,467.6 69.4,466.1 72.0,467.5 74.6,466.0 77.2,465.9 79.8,465.9 82.4,467.3 85.0,466.7 87.6,466.7 90.2,467.2 92.8,465.7 95.4,464.7 98.0,466.5 100.6,465.6 103.2,465.5 105.8,465.5 108.4,465.4 111.0,466.3 113.6,466.2 116.2,466.2 118.8,464.4 121.4,466.1 124.0,465.2 126.6,464.2 129.2,466.0 131.8,465.9 134.4,465.9 137.0,465.0 139.6,464.9 142.2,465.8 144.8,466.3 147.4,463.9 150.0,463.8 152.6,463.8 153.6,465.6 154.8,464.7 156.0,464.6 157.2,464.6 158.4,465.2 159.6,465.3 160.8,452.5 162.0,410.4 163.2,318.0 164.4,202.5 165.6,147.0 166.8,202.5 168.0,318.0 169.2,410.4 170.4,453.4 171.6,466.6 172.8,469.1 174.0,468.9 175.2,468.0 176.4,469.4 177.6,468.0 178.6,468.9 181.2,467.0 183.8,467.0 186.4,468.8 189.0,467.0 191.6,467.0 194.2,467.9 196.8,468.7 199.4,467.8 202.0,467.8 204.6,468.7 207.2,467.8 209.8,468.6 212.4,466.8 215.0,468.6 217.6,468.6 220.2,468.6 222.8,467.7 225.4,469.1 228.0,467.6 230.6,468.5 233.2,467.6 235.8,467.6 238.4,466.6 241.0,468.4 243.6,468.4 246.2,468.4 248.8,467.5 251.4,467.5 254.0,468.3 256.6,467.4 259.2,467.4 261.8,468.8 264.4,468.3 267.0,468.8 268.6,468.2 269.8,466.4 271.0,468.2 272.2,468.2 273.4,469.2 274.6,467.1 275.8,456.4 277.0,420.1 278.2,343.1 279.4,245.8 280.6,199.0 281.8,245.8 283.0,343.1 284.2,419.2 285.4,457.3 286.6,468.0 287.8,470.1 289.0,470.4 290.2,469.5 291.4,469.5 292.6,468.6 293.0,469.5 295.6,468.6 298.2,471.0 300.8,469.5 303.4,470.4 306.0,470.4 308.6,470.4 311.2,469.5 313.8,471.0 316.4,470.4 319.0,469.5 321.6,469.5 324.2,469.5 326.8,470.4 329.4,470.4 332.0,469.5 334.6,468.6 337.2,471.0 339.8,469.5 342.4,470.4 345.0,470.4 347.6,470.5 350.2,469.6 352.8,469.6 355.4,470.5 358.0,470.5 360.6,469.6 363.2,470.5 365.8,471.0 368.4,469.6 371.0,470.5 373.6,470.5 376.2,470.5 378.8,471.0 381.4,469.6 384.0,469.6 386.6,470.5 389.2,470.5 391.8,470.5 394.4,471.0 397.0,470.5 399.6,469.6 402.2,469.6 404.8,470.5 407.4,470.5 410.0,470.5 412.6,471.0 415.2,469.6 417.8,470.5 420.4,470.5 423.0,469.6 425.6,469.6 428.2,470.5 430.8,471.0 433.4,470.5 436.0,468.7 438.6,470.5 441.2,471.1 443.8,470.5 446.4,468.7 449.0,468.7 451.6,470.5 454.2,470.5 456.8,470.5 459.4,470.5 462.0,470.5 464.6,469.6 467.2,468.7 469.8,469.6 472.4,468.7 475.0,471.1 477.6,471.1 480.2,471.1 482.8,470.5 485.4,470.5 488.0,469.6 490.6,470.6 493.2,471.1 495.8,470.6 498.4,469.7 501.0,470.6 503.6,471.1 506.2,471.1 508.8,469.7 511.4,470.6 514.0,469.7 516.6,469.7 519.2,470.6 521.8,469.7 524.4,470.6 527.0,469.7 529.6,471.1 532.2,471.1 534.8,469.7 537.4,469.7 540.0,468.8 542.6,469.7 545.2,469.7 547.8,468.8 550.4,469.7 553.0,469.7 555.6,468.8 558.2,469.7 560.8,469.7 563.4,469.7 566.0,470.6 568.6,470.6 571.2,471.1 573.8,469.7 576.4,470.6 579.0,470.6 581.6,469.7 584.2,470.6 586.8,470.6 589.4,471.2 592.0,471.2 594.6,469.7 597.2,469.7 599.8,468.8 602.4,468.8 605.0,471.2 607.6,469.7 610.2,471.2 612.8,469.7 615.4,470.6 618.0,470.6 620.6,469.7 623.2,470.6 625.8,469.7 628.4,469.7 631.0,469.7 633.6,470.6 636.2,470.7 638.8,468.9 641.4,471.2 644.0,469.8 646.6,470.7 649.2,469.8 651.8,469.8 654.4,470.7 657.0,470.7 659.6,470.7 662.2,471.2 664.8,470.7 667.4,469.8 670.0,470.7 672.6,469.8 675.2,469.8 677.8,471.2 680.4,469.8 683.0,470.7 685.6,470.7 688.2,471.2 690.8,470.7 693.4,470.7 696.0,469.8 698.6,469.8 701.2,469.8 702.2,470.7 703.4,468.9 704.6,469.8 705.8,470.6 707.0,468.6 708.2,467.2 709.4,464.6 710.6,455.2 711.8,439.0 713.0,423.0 714.2,416.0 715.4,423.0 716.6,439.0 717.8,455.2 719.0,463.7 720.2,468.1 721.4,470.4 722.6,470.7 723.8,469.9 725.0,469.9 726.2,469.0 727.2,470.8 729.8,469.9 732.4,469.9 735.0,469.9 737.6,470.8 740.2,469.9 742.8,470.8 745.4,470.8 748.0,471.4 750.6,469.9 753.2,469.0 755.8,469.9 758.4,471.4 761.0,470.8 763.6,469.9 766.2,470.8 768.8,469.0 771.4,470.9 774.0,470.9 776.6,470.0 779.2,470.9 781.8,471.4 784.4,470.9 787.0,471.4 789.6,471.4 792.2,470.9 794.8,470.0 797.4,471.4 800.0,470.0 802.6,470.9 805.2,470.0 807.8,470.0 810.4,469.1 813.0,470.0 815.6,470.0 818.2,470.9 820.8,470.0 823.4,471.4 826.0,470.0 828.6,469.1 831.2,470.9 833.8,470.9 836.4,469.1 839.0,470.9 841.6,470.9 844.2,469.1 846.8,470.9 849.4,471.5 852.0,470.9 854.6,470.9 857.2,470.9 859.8,471.5 862.4,469.1 865.0,469.1 867.6,470.0 870.2,470.0 872.8,471.5 875.4,471.5 878.0,470.9 880.6,470.0 883.2,469.1 885.8,471.5 888.4,470.0 891.0,470.9 893.6,470.0 896.2,469.1 898.8,471.0 901.4,470.1 904.0,471.0 906.6,471.0 909.2,471.0 911.8,470.1 914.4,471.0 917.0,470.1 919.6,471.0 922.2,470.1 924.8,470.1 927.4,470.1 930.0,470.1 932.6,471.5 935.2,471.0 937.8,471.5 940.4,471.0 943.0,470.1 945.6,470.1 948.2,469.2 950.8,471.0 953.4,469.2 956.0,469.2 958.6,471.0 961.2,470.1"/>
<polyline fill="none" stroke="#c02020" stroke-width="1.2" clip-path="url(#r1)" points="7.0,468.5 9.6,468.5 12.2,468.5 14.8,467.0 17.4,467.8 20.0,468.3 22.6,467.7 25.2,467.7 27.8,468.2 30.4,466.7 33.0,467.6 35.6,467.5 38.2,467.5 40.8,465.6 43.4,467.9 46.0,467.4 48.6,467.3 51.2,467.3 53.8,467.2 56.4,467.2 59.0,466.2 61.6,466.2 64.2,467.1 66.8,467.6 69.4,466.1 72.0,467.5 74.6,466.0 77.2,465.9 79.8,465.9 82.4,467.3 85.0,466.7 87.6,466.7 90.2,467.2 92.8,465.7 95.4,464.7 98.0,466.5 100.6,465.6 103.2,465.5 105.8,465.5 108.4,465.4 111.0,466.3 113.6,466.2 116.2,466.2 118.8,464.4 121.4,466.1 124.0,465.2 126.6,464.2 129.2,466.0 131.8,465.9 134.4,465.9 137.0,465.0 139.6,464.9 142.2,465.8 144.8,466.3 147.4,463.9 150.0,463.8 152.6,463.8 153.6,465.6 154.8,464.7 156.0,464.6 157.2,464.6 158.4,465.2 159.6,465.3 160.8,452.5 162.0,410.4 163.2,318.0 164.4,202.5 165.6,147.0 166.8,202.5 168.0,318.0 169.2,410.4 170.4,453.4 171.6,466.6 172.8,469.1 174.0,468.9 175.2,468.0 176.4,469.4 177.6,468.0 178.6,468.9 181.2,467.0 183.8,467.0 186.4,468.8 189.0,467.0 191.6,467.0 194.2,467.9 196.8,468.7 199.4,467.8 202.0,467.8 204.6,468.7 207.2,467.8 209.8,468.6 212.4,466.8 215.0,468.6 217.6,468.6 220.2,468.6 222.8,467.7 225.4,469.1 228.0,467.6 230.6,468.5 233.2,467.6 235.8,467.6 238.4,466.6 241.0,468.4 243.6,468.4 246.2,468.4 248.8,467.5 251.4,467.5 254.0,468.3 256.6,467.4 259.2,467.4 261.8,468.8 264.4,468.3 267.0,468.8 268.6,468.2 269.8,466.4 271.0,468.2 272.2,468.2 273.4,469.2 274.6,467.1 275.8,456.4 277.0,420.1 278.2,343.1 279.4,245.8 280.6,199.0 281.8,245.8 283.0,343.1 284.2,419.2 285.4,457.3 286.6,468.0 287.8,470.1 289.0,470.4 290.2,469.5 291.4,469.5 292.6,468.6 293.0,469.5 295.6,468.6 298.2,471.0 300.8,469.5 303.4,470.4 306.0,470.4 308.6,470.4 311.2,469.5 313.8,471.0 316.4,470.4 319.0,469.5 321.6,469.5 324.2,469.5 326.8,470.4 329.4,470.4 332.0,469.5 334.6,468.6 337.2,471.0 339.8,469.5 342.4,470.4 345.0,470.4 347.6,470.5 350.2,469.6 352.8,469.6 355.4,470.5 358.0,470.5 360.6,469.6 363.2,470.5 365.8,471.0 368.4,469.6 371.0,470.5 373.6,470.5 376.2,470.5 378.8,471.0 381.4,469.6 384.0,469.6 386.6,470.5 389.2,470.5 391.8,470.5 394.4,471.0 397.0,470.5 399.6,469.6 402.2,469.6 404.8,470.5 407.4,470.5 410.0,470.5 412.6,471.0 415.2,469.6 417.8,470.5 420.4,470.5 423.0,469.6 425.6,469.6 428.2,470.5 430.8,471.0 433.4,470.5 436.0,468.7 438.6,470.5 441.2,471.1 443.8,470.5 446.4,468.7 449.0,468.7 451.6,470.5 454.2,470.5 456.8,470.5 459.4,470.5 462.0,470.5 464.6,469.6 467.2,468.7 469.8,469.6 472.4,468.7 475.0,471.1 477.6,471.1 480.2,471.1 482.8,470.5 485.4,470.5 488.0,469.6 490.6,470.6 493.2,471.1 495.8,470.6 498.4,469.7 501.0,470.6 503.6,471.1 506.2,471.1 508.8,469.7 511.4,470.6 514.0,469.7 516.6,469.7 519.2,470.6 521.8,469.7 524.4,470.6 527.0,469.7 529.6,471.1 532.2,471.1 534.8,469.7 537.4,469.7 540.0,468.8 542.6,469.7 545.2,469.7 547.8,468.8 550.4,469.7 553.0,469.7 555.6,468.8 558.2,469.7 560.8,469.7 563.4,469.7 566.0,470.6 568.6,470.6 571.2,471.1 573.8,469.7 576.4,470.6 579.0,470.6 581.6,469.7 584.2,470.6 586.8,470.6 589.4,471.2 592.0,471.2 594.6,469.7 597.2,469.7 599.8,468.8 602.4,468.8 605.0,471.2 607.6,469.7 610.2,471.2 612.8,469.7 615.4,470.6 618.0,470.6 620.6,469.7 623.2,470.6 625.8,469.7 628.4,469.7 631.0,469.7 633.6,470.6 636.2,470.7 638.8,468.9 641.4,471.2 644.0,469.8 646.6,470.7 649.2,469.8 651.8,469.8 654.4,470.7 657.0,470.7 659.6,470.7 662.2,471.2 664.8,470.7 667.4,469.8 670.0,470.7 672.6,469.8 675.2,469.8 677.8,471.2 680.4,469.8 683.0,470.7 685.6,470.7 688.2,471.2 690.8,470.7 693.4,470.7 696.0,469.8 698.6,469.8 701.2,469.8 702.2,470.7 703.4,468.9 704.6,469.8 705.8,470.6 707.0,468.6 708.2,467.2 709.4,464.6 710.6,455.2 711.8,439.0 713.0,423.0 714.2,416.0 715.4,423.0 716.6,439.0 717.8,455.2 719.0,463.7 720.2,468.1 721.4,470.4 722.6,470.7 723.8,469.9 725.0,469.9 726.2,469.0 727.2,470.8 729.8,469.9 732.4,469.9 735.0,469.9 737.6,470.8 740.2,469.9 742.8,470.8 745.4,470.8 748.0,471.4 750.6,469.9 753.2,469.0 755.8,469.9 758.4,471.4 761.0,470.8 763.6,469.9 766.2,470.8 768.8,469.0 771.4,470.9 774.0,470.9 776.6,470.0 779.2,470.9 781.8,471.4 784.4,470.9 787.0,471.4 789.6,471.4 792.2,470.9 794.8,470.0 797.4,471.4 800.0,470.0 802.6,470.9 805.2,470.0 807.8,470.0 810.4,469.1 813.0,470.0 815.6,470.0 818.2,470.9 820.8,470.0 823.4,471.4 826.0,470.0 828.6,469.1 831.2,470.9 833.8,470.9 836.4,469.1 839.0,470.9 841.6,470.9 844.2,469.1 846.8,470.9 849.4,471.5 852.0,470.9 854.6,470.9 857.2,470.9 859.8,471.5 862.4,469.1 865.0,469.1 867.6,470.0 870.2,470.0 872.8,471.5 875.4,471.5 878.0,470.9 880.6,470.0 883.2,469.1 885.8,471.5 888.4,470.0 891.0,470.9 893.6,470.0 896.2,469.1 898.8,471.0 901.4,470.1 904.0,471.0 906.6,471.0 909.2,471.0 911.8,470.1 914.4,471.0 917.0,470.1 919.6,471.0 922.2,470.1 924.8,470.1 927.4,470.1 930.0,470.1 932.6,471.5 935.2,471.0 937.8,471.5 940.4,471.0 943.0,470.1 945.6,470.1 948.2,469.2 950.8,471.0 953.4,469.2 956.0,469.2 958.6,471.0 961.2,470.1"/>
<polyline fill="none" stroke="#c02020" stroke-width="1.2" clip-path="url(#r2)" points="7.0,468.5 9.6,468.5 12.2,468.5 14.8,467.0 17.4,467.8 20.0,468.3 22.6,467.7 25.2,467.7 27.8,468.2 30.4,466.7 33.0,467.6 35.6,467.5 38.2,467.5 40.8,465.6 43.4,467.9 46.0,467.4 48.6,467.3 51.2,467.3 53.8,467.2 56.4,467.2 59.0,466.2 61.6,466.2 64.2,467.1 66.8,467.6 69.4,466.1 72.0,467.5 74.6,466.0 77.2,465.9 79.8,465.9 82.4,467.3 85.0,466.7 87.6,466.7 90.2,467.2 92.8,465.7 95.4,464.7 98.0,466.5 100.6,465.6 103.2,465.5 105.8,465.5 108.4,465.4 111.0,466.3 113.6,466.2 116.2,466.2 118.8,464.4 121.4,466.1 124.0,465.2 126.6,464.2 129.2,466.0 131.8,465.9 134.4,465.9 137.0,465.0 139.6,464.9 142.2,465.8 144.8,466.3 147.4,463.9 150.0,463.8 152.6,463.8 153.6,465.6 154.8,464.7 156.0,464.6 157.2,464.6 158.4,465.2 159.6,465.3 160.8,452.5 162.0,410.4 163.2,318.0 164.4,202.5 165.6,147.0 166.8,202.5 168.0,318.0 169.2,410.4 170.4,453.4 171.6,466.6 172.8,469.1 174.0,468.9 175.2,468.0 176.4,469.4 177.6,468.0 178.6,468.9 181.2,467.0 183.8,467.0 186.4,468.8 189.0,467.0 191.6,467.0 194.2,467.9 196.8,468.7 199.4,467.8 202.0,467.8 204.6,468.7 207.2,467.8 209.8,468.6 212.4,466.8 215.0,468.6 217.6,468.6 220.2,468.6 222.8,467.7 225.4,469.1 228.0,467.6 230.6,468.5 233.2,467.6 235.8,467.6 238.4,466.6 241.0,468.4 243.6,468.4 246.2,468.4 248.8,467.5 251.4,467.5 254.0,468.3 256.6,467.4 259.2,467.4 261.8,468.8 264.4,468.3 267.0,468.8 268.6,468.2 269.8,466.4 271.0,468.2 272.2,468.2 273.4,469.2 274.6,467.1 275.8,456.4 277.0,420.1 278.2,343.1 279.4,245.8 280.6,199.0 281.8,245.8 283.0,343.1 284.2,419.2 285.4,457.3 286.6,468.0 287.8,470.1 289.0,470.4 290.2,469.5 291.4,469.5 292.6,468.6 293.0,469.5 295.6,468.6 298.2,471.0 300.8,469.5 303.4,470.4 306.0,470.4 308.6,470.4 311.2,469.5 313.8,471.0 316.4,470.4 319.0,469.5 321.6,469.5 324.2,469.5 326.8,470.4 329.4,470.4 332.0,469.5 334.6,468.6 337.2,471.0 339.8,469.5 342.4,470.4 345.0,470.4 347.6,470.5 350.2,469.6 352.8,469.6 355.4,470.5 358.0,470.5 360.6,469.6 363.2,470.5 365.8,471.0 368.4,469.6 371.0,470.5 373.6,470.5 376.2,470.5 378.8,471.0 381.4,469.6 384.0,469.6 386.6,470.5 389.2,470.5 391.8,470.5 394.4,471.0 397.0,470.5 399.6,469.6 402.2,469.6 404.8,470.5 407.4,470.5 410.0,470.5 412.6,471.0 415.2,469.6 417.8,470.5 420.4,470.5 423.0,469.6 425.6,469.6 428.2,470.5 430.8,471.0 433.4,470.5 436.0,468.7 438.6,470.5 441.2,471.1 443.8,470.5 446.4,468.7 449.0,468.7 451.6,470.5 454.2,470.5 456.8,470.5 459.4,470.5 462.0,470.5 464.6,469.6 467.2,468.7 469.8,469.6 472.4,468.7 475.0,471.1 477.6,471.1 480.2,471.1 482.8,470.5 485.4,470.5 488.0,469.6 490.6,470.6 493.2,471.1 495.8,470.6 498.4,469.7 501.0,470.6 503.6,471.1 506.2,471.1 508.8,469.7 511.4,470.6 514.0,469.7 516.6,469.7 519.2,470.6 521.8,469.7 524.4,470.6 527.0,469.7 529.6,471.1 532.2,471.1 534.8,469.7 537.4,469.7 540.0,468.8 542.6,469.7 545.2,469.7 547.8,468.8 550.4,469.7 553.0,469.7 555.6,468.8 558.2,469.7 560.8,469.7 563.4,469.7 566.0,470.6 568.6,470.6 571.2,471.1 573.8,469.7 576.4,470.6 579.0,470.6 581.6,469.7 584.2,470.6 586.8,470.6 589.4,471.2 592.0,471.2 594.6,469.7 597.2,469.7 599.8,468.8 602.4,468.8 605.0,471.2 607.6,469.7 610.2,471.2 612.8,469.7 615.4,470.6 618.0,470.6 620.6,469.7 623.2,470.6 625.8,469.7 628.4,469.7 631.0,469.7 633.6,470.6 636.2,470.7 638.8,468.9 641.4,471.2 644.0,469.8 646.6,470.7 649.2,469.8 651.8,469.8 654.4,470.7 657.0,470.7 659.6,470.7 662.2,471.2 664.8,470.7 667.4,469.8 670.0,470.7 672.6,469.8 675.2,469.8 677.8,471.2 680.4,469.8 683.0,470.7 685.6,470.7 688.2,471.2 690.8,470.7 693.4,470.7 696.0,469.8 698.6,469.8 701.2,469.8 702.2,470.7 703.4,468.9 704.6,469.8 705.8,470.6 707.0,468.6 708.2,467.2 709.4,464.6 710.6,455.2 711.8,439.0 713.0,423.0 714.2,416.0 715.4,423.0 716.6,439.0 717.8,455.2 719.0,463.7 720.2,468.1 721.4,470.4 722.6,470.7 723.8,469.9 725.0,469.9 726.2,469.0 727.2,470.8 729.8,469.9 732.4,469.9 735.0,469.9 737.6,470.8 740.2,469.9 742.8,470.8 745.4,470.8 748.0,471.4 750.6,469.9 753.2,469.0 755.8,469.9 758.4,471.4 761.0,470.8 763.6,469.9 766.2,470.8 768.8,469.0 771.4,470.9 774.0,470.9 776.6,470.0 779.2,470.9 781.8,471.4 784.4,470.9 787.0,471.4 789.6,471.4 792.2,470.9 794.8,470.0 797.4,471.4 800.0,470.0 802.6,470.9 805.2,470.0 807.8,470.0 810.4,469.1 813.0,470.0 815.6,470.0 818.2,470.9 820.8,470.0 823.4,471.4 826.0,470.0 828.6,469.1 831.2,470.9 833.8,470.9 836.4,469.1 839.0,470.9 841.6,470.9 844.2,469.1 846.8,470.9 849.4,471.5 852.0,470.9 854.6,470.9 857.2,470.9 859.8,471.5 862.4,469.1 865.0,469.1 867.6,470.0 870.2,470.0 872.8,471.5 875.4,471.5 878.0,470.9 880.6,470.0 883.2,469.1 885.8,471.5 888.4,470.0 891.0,470.9 893.6,470.0 896.2,469.1 898.8,471.0 901.4,470.1 904.0,471.0 906.6,471.0 909.2,471.0 911.8,470.1 914.4,471.0 917.0,470.1 919.6,471.0 922.2,470.1 924.8,470.1 927.4,470.1 930.0,470.1 932.6,471.5 935.2,471.0 937.8,471.5 940.4,471.0 943.0,470.1 945.6,470.1 948.2,469.2 950.8,471.0 953.4,469.2 956.0,469.2 958.6,471.0 961.2,470.1"/>
<path shape-rendering="auto" d="M715.3 133 V476" stroke="#40c840" stroke-width="1.3"/>
<polyline fill="none" stroke="#ffffff" stroke-width="1.2" points="7.0,668.2 9.2,668.2 11.4,668.2 13.6,668.2 15.8,668.2 18.0,668.2 20.2,668.2 22.4,668.2 24.6,666.0 26.8,663.6 29.0,663.6 31.2,663.6 33.4,663.6 35.6,663.6 37.8,663.6 40.0,663.6 42.2,663.6 44.4,663.6 45.0,663.5 45.5,591.0 46.5,591.0 47.0,513.0 47.5,513.0 48.3,591.0 49.0,600.0 49.5,663.5 51.0,663.8 53.0,664.0 53.5,600.0 54.6,600.0 55.0,538.0 55.5,538.0 56.4,610.0 57.0,664.0 58.5,665.4 60.7,665.4 62.9,664.9 65.1,665.8 67.3,666.3 69.5,664.9 71.7,666.3 73.9,666.3 76.1,666.8 78.3,665.4 80.5,665.4 82.7,666.3 84.9,665.0 87.0,664.0 88.0,640.0 89.0,640.0 90.0,655.0 91.0,665.0 92.5,665.0 94.7,665.5 96.9,666.8 99.1,666.0 101.3,666.0 103.5,665.1 105.7,666.9 107.9,666.0 110.1,666.9 112.3,665.5 114.5,665.1 116.7,666.5 118.9,665.1 121.1,665.1 123.3,665.1 125.5,666.9 127.7,667.0 129.9,667.0 132.1,667.0 134.3,666.5 136.5,665.6 138.7,665.6 140.9,665.7 143.1,665.2 145.3,665.7 147.5,665.7 149.7,665.7 151.9,666.1 154.1,665.3 156.3,667.1 158.5,665.3 160.7,665.7 162.9,666.6 165.1,665.3 167.3,665.3 169.5,666.2 171.7,666.7 173.9,666.7 176.1,666.7 178.3,667.1 180.5,666.3 182.0,665.0 183.4,661.0 185.0,665.0 186.5,666.7 188.7,665.8 190.9,667.2 193.1,666.3 195.3,665.4 197.5,665.4 199.7,665.9 201.9,665.9 204.0,666.0 204.8,648.0 205.2,634.0 206.0,634.0 206.3,650.0 207.0,666.0 208.5,666.8 210.7,666.8 212.9,666.4 215.1,666.4 217.3,666.8 219.5,665.9 220.5,666.0 221.8,657.0 222.6,657.0 223.8,666.0 225.3,667.3 227.5,666.0 229.7,665.5 231.9,667.3 234.1,665.5 236.3,666.5 238.5,665.6 240.7,666.9 242.9,667.4 245.1,667.4 247.3,666.0 249.5,667.4 251.7,667.4 253.9,666.5 256.1,666.5 258.3,666.5 260.5,665.6 262.7,666.1 264.9,667.0 267.1,666.1 269.3,666.6 271.5,667.5 273.7,666.6 275.9,667.1 278.1,666.2 280.3,667.1 282.5,666.2 285.5,666.0 286.3,655.0 287.2,657.0 289.5,666.0 291.0,666.2 293.2,665.8 295.4,666.7 297.6,666.7 299.8,667.1 301.5,666.0 302.4,661.0 303.0,661.0 304.0,666.0 305.5,665.8 307.7,665.8 309.9,666.7 312.1,667.6 314.3,665.8 316.5,666.3 318.7,666.8 320.9,666.8 323.1,666.8 325.3,666.3 327.5,667.2 329.7,667.7 331.9,667.2 334.1,667.2 336.3,667.2 338.5,667.2 340.7,667.2 342.9,667.2 345.1,667.2 347.3,667.2 349.5,667.2 351.7,667.2 353.9,667.2 356.1,667.2 358.3,667.2 360.5,667.2 362.7,667.2 364.9,667.2 367.1,667.2 369.3,667.2 371.5,667.2 373.7,667.2 375.9,667.2 378.1,667.2 380.3,667.2 382.5,667.2 384.7,667.2 386.9,667.2 389.1,667.2 391.3,667.2 393.5,667.2 394.5,667.0 395.2,658.0 395.5,646.0 396.3,646.0 396.6,658.0 397.3,667.0 398.8,667.2 401.0,667.2 403.2,667.2 405.4,667.2 407.6,667.2 409.8,667.2 412.0,667.2 414.2,667.2 416.4,667.2 418.6,667.2 420.8,667.2 423.0,667.2 425.2,667.2 427.4,667.2 429.6,667.2 431.8,667.2 434.0,667.2 436.2,667.2 438.4,667.2 440.6,667.2 442.8,667.2 445.0,667.2 447.2,667.2 449.4,667.2 451.6,667.2 453.8,667.2 456.0,667.2 458.2,667.2 460.4,667.2 462.6,667.2 464.8,667.2 467.0,667.2 469.2,667.2 471.4,667.2 473.6,667.9 475.8,667.2 478.0,667.2 480.2,666.5 482.4,666.5 484.6,666.9 486.8,667.9 489.0,666.5 491.2,666.9 493.4,667.6 495.6,667.6 497.8,666.5 500.0,667.2 502.2,667.6 504.4,666.5 506.6,667.9 508.8,667.2 511.0,666.5 513.2,666.9 515.4,667.6 517.6,667.6 519.8,667.2 522.0,666.9 524.2,666.5 526.4,667.9 528.6,667.2 530.8,667.2 533.0,667.2 535.2,667.2 537.4,667.2 539.6,667.2 541.8,667.2 544.0,667.2 546.2,667.2 548.4,667.2 550.6,667.2 552.8,667.0 553.5,655.0 553.8,633.0 554.6,633.0 554.9,655.0 555.7,667.0 557.2,667.2 559.4,667.2 561.6,667.2 563.8,667.2 566.0,667.2 568.2,667.2 570.4,667.2 572.6,667.2 574.8,667.2 577.0,667.2 579.2,667.2 581.4,667.2 583.6,667.2 585.8,667.2 588.0,667.2 590.2,667.2 592.4,667.2 594.6,667.2 596.8,667.2 599.0,667.2 601.2,667.2 603.4,667.2 605.6,667.2 607.8,667.2 610.0,667.2 612.2,667.2 614.4,667.2 616.6,667.2 618.8,667.2 621.0,667.2 623.2,667.2 625.4,667.2 626.3,667.0 627.0,650.0 627.3,640.0 628.1,641.0 628.5,652.0 629.2,667.0 630.7,667.2 632.9,667.2 635.1,667.2 637.3,667.2 639.5,667.2 641.7,667.2 643.9,667.2 646.1,667.2 648.3,667.2 650.5,667.2 652.7,667.2 654.9,667.2 657.1,667.2 659.3,667.2 661.5,667.2 663.7,667.2 665.9,667.2 668.1,667.2 670.3,667.2 672.5,667.2 674.7,667.2 676.9,667.2 679.1,667.2 681.3,667.2 683.5,667.2 685.7,667.2 687.9,667.2 690.1,667.2 692.3,667.2 694.5,667.2 696.7,667.2 698.9,667.2 701.1,667.2 703.3,667.2 705.5,667.2 707.7,667.2 709.9,667.2 712.1,667.2 714.3,667.2 716.5,667.2 718.7,667.2 720.9,667.2 723.1,667.2 725.3,667.2 727.5,667.2 729.7,667.2 731.9,667.2 734.1,667.2 736.3,667.2 738.5,667.2 740.7,667.2 742.9,667.2 745.1,667.2 747.3,667.2 749.5,667.2 751.7,667.2 753.9,667.2 756.1,667.2 758.3,667.2 760.5,667.2 762.7,667.2 764.9,667.2 767.1,667.2 769.3,667.2 771.5,667.2 773.7,667.2 775.9,667.2 778.1,667.2 780.3,667.2 782.5,667.2 784.7,667.2 786.9,667.2 789.1,667.2 791.3,667.2 793.5,667.2 795.7,667.2 797.9,667.2 800.1,667.2 802.3,667.2 804.5,667.2 806.7,667.2 808.9,667.2 811.1,667.2 813.3,667.2 815.5,667.2 817.7,667.2 819.9,667.2 822.1,667.2 824.3,667.2 826.5,667.2 828.7,667.2 830.9,667.2 833.1,667.2 835.3,667.2 837.5,667.2 839.7,667.2 841.9,667.2 844.1,667.2 846.3,667.2 848.5,667.2 850.7,667.2 852.9,667.2 855.1,667.2 857.3,667.2 859.5,667.2 861.7,667.2 863.9,667.2 866.1,667.2 868.3,667.2 870.5,667.2 872.7,667.2 874.9,667.2 877.1,667.2 879.3,667.2 881.5,667.2 883.7,667.2 885.9,667.2 888.1,667.2 890.3,667.2 892.5,667.2 894.7,667.2 896.9,667.2 899.1,667.2 901.3,667.2 903.5,667.2 905.7,667.2 907.9,667.2 910.1,667.2 912.3,667.2 914.5,667.2 916.7,667.2 918.9,667.2 921.1,667.2 923.3,667.2 925.5,667.2 927.7,667.2 929.9,667.2 932.1,667.2 934.3,667.2 936.5,667.2 938.7,667.2 940.9,667.2 943.1,667.2 945.3,667.2 947.5,667.2 949.7,667.2 951.9,667.2 954.1,667.2 956.3,667.2 958.5,667.2 960.7,667.2 962.9,667.2"/>
<path shape-rendering="auto" d="M35.3 513 V669 M108.9 513 V669" stroke="#a82424" stroke-width="1.3"/>
</svg>
<div style="left:166px;top:132px;color:#ffff40;font-weight:bold;font-size:12px;line-height:14px">Eu155</div>
<div style="left:281px;top:182px;color:#ffff40;font-weight:bold;font-size:12px;line-height:14px">Eu155</div>
<div style="left:716px;top:401px;color:#ffff40;font-weight:bold;font-size:12px;line-height:14px">Sb125</div>
<div style="left:919px;top:522px;width:19px;height:22px;background:#c0c0c0;box-shadow:inset 1px 1px #fff,inset -1px -1px #808080"></div>
<div style="left:942px;top:522px;width:19px;height:22px;background:#c0c0c0;box-shadow:inset 1px 1px #fff,inset -1px -1px #808080"></div>
<svg style="left:919px;top:522px" width="42" height="22" viewBox="0 0 42 22"><path d="M2.5 3 H16.5 L9.5 10Z M9.5 12 L16.5 19 H2.5Z" fill="url(#dith)"/><path d="M2.5 3.5 H16.5 M2.5 18.5 H16.5" stroke="#000"/><path d="M25.5 10 L32.5 3 L39.5 10Z M25.5 12 H39.5 L32.5 19Z" fill="url(#dith)"/><path d="M25.5 10.5 H39.5 M25.5 12.5 H39.5" stroke="#000"/></svg>
<div style="left:9px;top:680px;width:25px;height:25px;background:#000"></div>
<svg style="left:10px;top:681px" width="23" height="23" viewBox="0 0 23 23"><rect width="23" height="23" fill="#fff"/><rect x="1" y="1" width="21" height="21" fill="#0000a0"/><path d="M3 21 L4 19 L5 16 V10 H6 V4 H8 V10 H9 V16 L10 19 L11 21Z" fill="#10e010"/><rect x="5.5" y="5" width="2" height="5" fill="#60d0a0"/><path d="M12 21 L13 19 L14 15 V4 H16 V15 L17 19 L19 21Z" fill="#f01010"/></svg>
<div style="left:40px;top:684px;font-weight:bold;font-size:12px;line-height:16px;letter-spacing:-0.2px">ROI:</div>
<div style="left:65px;top:684px;width:200px;height:16px;background:#00e000;box-shadow:inset 1px 1px #808080,inset -1px -1px #fff,inset 2px 2px #000"></div>
<div style="left:68px;top:685px;font-weight:bold;font-size:12px;line-height:15px;letter-spacing:0.27px">6 : Sb125 : Sb125@ 176.3</div>
<div class="raised1" style="left:265px;top:684px;width:16px;height:8px;"></div>
<div class="raised1" style="left:265px;top:692px;width:16px;height:8px;"></div>
<svg style="left:270px;top:685px" width="6" height="14"><path d="M0.5 4 H5.5 L3 1.5Z M0.5 9.5 H5.5 L3 12Z" fill="#000"/></svg>
<div style="left:286px;top:685px;font-weight:bold;font-size:12px;line-height:16px">ID:</div>
<div style="left:304px;top:683px;width:96px;height:19px;background:#fff;box-shadow:inset 1px 1px #808080,inset -1px -1px #dfdfdf,inset 2px 2px #000"></div>
<div style="left:307px;top:685px;font-size:13px;line-height:15px;-webkit-text-stroke:0.3px #000">Sb125@ 176.3</div>
<div style="left:425px;top:685px;font-weight:bold;font-size:12px;line-height:15px">Net Integral:</div>
<div style="left:496px;top:684px;width:97px;height:17px;box-shadow:inset 1px 1px #808080,inset -1px -1px #fff,inset 2px 2px #000"></div>
<div style="left:496px;top:685px;width:97px;text-align:center;font-weight:bold;font-size:12px;line-height:15px">4,099</div>
<div style="left:599px;top:685px;font-weight:bold;font-size:12px;line-height:15px">FWHM:</div>
<div style="left:640px;top:684px;width:56px;height:17px;box-shadow:inset 1px 1px #808080,inset -1px -1px #fff,inset 2px 2px #000"></div>
<div style="left:640px;top:685px;width:56px;text-align:center;font-weight:bold;font-size:12px;line-height:15px">0.91</div>
<div style="left:701px;top:680px;width:87px;height:25px;background:#000"></div>
<svg style="left:702px;top:681px" width="37" height="23" viewBox="0 0 37 23"><rect width="37" height="23" fill="#fff"/><rect x="1" y="1" width="36" height="22" fill="#808080"/><rect x="1" y="1" width="35" height="21" fill="#0000a0"/><text x="35" y="9" text-anchor="end" font-family="Liberation Sans" font-weight="bold" font-size="7.5" fill="#40d0ff" letter-spacing="0.4">LABEL</text><polyline shape-rendering="crispEdges" fill="none" stroke="#fff" stroke-width="1" points="3.5,19.5 5.5,18.5 5.5,7.5 9.5,7.5 9.5,18.5 12.5,18.5 12.5,11.5 12.5,18.5 18.5,18.5 18.5,11.5 21.5,11.5 21.5,18.5 27.5,18.5 27.5,14.5 31.5,14.5 31.5,18.5 35.5,18.5"/><path shape-rendering="crispEdges" d="M3 19.5 H36" stroke="#fff"/></svg>
<svg style="left:742px;top:681px" width="21" height="23" viewBox="0 0 21 23"><rect width="21" height="23" fill="#fff"/><rect x="1" y="1" width="20" height="22" fill="#808080"/><rect x="1" y="1" width="19" height="21" fill="#000"/><path d="M1 22 V18 H6 L8 16 L9 10 L10 5 L11 10 L12 16 L14 18 H20 V22Z" fill="#10e010"/><path d="M6 22 L8 16 L9 10 L10 5 L11 10 L12 16 L14 22Z" fill="#f01010"/><text x="20" y="9" text-anchor="end" font-family="Liberation Sans" font-size="9.5" fill="#fff">Nu</text></svg>
<svg style="left:765px;top:681px" width="22" height="23" viewBox="0 0 22 23"><rect width="22" height="23" fill="#fff"/><rect x="1" y="1" width="21" height="22" fill="#808080"/><rect x="1" y="1" width="20" height="21" fill="#000"/><path d="M16 6.5 H19" stroke="#fff"/></svg>
<div style="left:792px;top:680px;width:69px;height:25px;background:#000"></div>
<svg style="left:793px;top:681px" width="16" height="23" viewBox="0 0 16 23"><rect width="16" height="23" fill="#fff"/><rect x="1" y="1" width="15" height="22" fill="#808080"/><rect x="1" y="1" width="14" height="21" fill="#0000a0"/><path d="M1 22 L3 18 V6 H5 V16 L7 19 L9 14 V5 H11 V16 L13 19 V22Z" fill="#10e010"/><rect x="7" y="18" width="3" height="4" fill="#e040e0"/><path d="M2 2 L14 21 M14 2 L2 21" stroke="#f02020" stroke-width="2"/></svg>
<svg style="left:810px;top:681px" width="16" height="23" viewBox="0 0 16 23"><rect width="16" height="23" fill="#fff"/><rect x="1" y="1" width="15" height="22" fill="#808080"/><rect x="1" y="1" width="14" height="21" fill="#0000a0"/><path d="M1 22 L3 18 V6 H5 V16 L7 19 L9 14 V5 H11 V16 L13 19 V22Z" fill="#10e010"/><rect x="7" y="18" width="3" height="4" fill="#e040e0"/><path d="M2 2 L14 21 M14 2 L2 21" stroke="#f02020" stroke-width="2"/></svg>
<svg style="left:827px;top:681px" width="16" height="23" viewBox="0 0 16 23"><rect width="16" height="23" fill="#fff"/><rect x="1" y="1" width="15" height="22" fill="#808080"/><rect x="1" y="1" width="14" height="21" fill="#0000a0"/><path d="M1 22 L3 18 V6 H5 V16 L7 19 L9 14 V5 H11 V16 L13 19 V22Z" fill="#10e010"/><rect x="7" y="18" width="3" height="4" fill="#e040e0"/><path d="M2 2 L14 21 M14 2 L2 21" stroke="#f02020" stroke-width="2"/></svg>
<svg style="left:844px;top:681px" width="16" height="23" viewBox="0 0 16 23"><rect width="16" height="23" fill="#fff"/><rect x="1" y="1" width="15" height="22" fill="#808080"/><rect x="1" y="1" width="14" height="21" fill="#0000a0"/><path d="M1 22 L4 18 L6 15 L7 10 L8 4 L9 10 L10 15 L12 18 L16 22Z" fill="#10e010"/><path d="M3 7 L13 17 M13 7 L3 17" stroke="#f02020" stroke-width="1.8"/></svg>
<div style="left:864px;top:673px;width:97px;height:39px;background:#000"></div>
<div style="left:865px;top:674px;width:23px;height:18px;background:#c0c0c0;box-shadow:inset 1px 1px #fff,inset -1px -1px #000,inset -2px -2px #808080"></div>
<div style="left:889px;top:674px;width:23px;height:18px;background:#c0c0c0;box-shadow:inset 1px 1px #fff,inset -1px -1px #000,inset -2px -2px #808080"></div>
<div style="left:913px;top:674px;width:23px;height:18px;background:#c0c0c0;box-shadow:inset 1px 1px #fff,inset -1px -1px #000,inset -2px -2px #808080"></div>
<div style="left:937px;top:674px;width:23px;height:18px;background:#c0c0c0;box-shadow:inset 1px 1px #fff,inset -1px -1px #000,inset -2px -2px #808080"></div>
<div style="left:865px;top:693px;width:23px;height:18px;background:#c0c0c0;box-shadow:inset 1px 1px #fff,inset -1px -1px #000,inset -2px -2px #808080"></div>
<div style="left:889px;top:693px;width:23px;height:18px;background:#c0c0c0;box-shadow:inset 1px 1px #fff,inset -1px -1px #000,inset -2px -2px #808080"></div>
<div style="left:913px;top:693px;width:23px;height:18px;background:#c0c0c0;box-shadow:inset 1px 1px #fff,inset -1px -1px #000,inset -2px -2px #808080"></div>
<div style="left:937px;top:693px;width:23px;height:18px;background:#c0c0c0;box-shadow:inset 1px 1px #fff,inset -1px -1px #000,inset -2px -2px #808080"></div>
<svg style="left:0;top:0" width="971" height="748" viewBox="0 0 971 748"><path d="M868 676 L875 683.0 L868 690Z" fill="url(#dith)"/><path d="M868.5 676 V690" stroke="#000"/><path d="M884 676 L877 683.0 L884 690Z" fill="url(#dith)"/><path d="M883.5 676 V690" stroke="#000"/><path d="M892 676 L899 683.0 L892 690Z" fill="url(#dith)"/><path d="M892.5 676 V690" stroke="#000"/><rect x="902" y="676" width="2" height="14" fill="#000"/><rect x="920" y="676" width="2" height="14" fill="#000"/><path d="M932 676 L925 683.0 L932 690Z" fill="url(#dith)"/><path d="M931.5 676 V690" stroke="#000"/><path d="M947 676 L940 683.0 L947 690Z" fill="url(#dith)"/><path d="M946.5 676 V690" stroke="#000"/><path d="M956 676 L949 683.0 L956 690Z" fill="url(#dith)"/><path d="M955.5 676 V690" stroke="#000"/><path d="M875 695 L868 702.0 L875 709Z" fill="url(#dith)"/><path d="M874.5 695 V709" stroke="#000"/><path d="M877 695 L884 702.0 L877 709Z" fill="url(#dith)"/><path d="M877.5 695 V709" stroke="#000"/><path d="M899 695 L892 702.0 L899 709Z" fill="url(#dith)"/><path d="M898.5 695 V709" stroke="#000"/><rect x="902" y="695" width="2" height="14" fill="#000"/><rect x="920" y="695" width="2" height="14" fill="#000"/><path d="M925 695 L932 702.0 L925 709Z" fill="url(#dith)"/><path d="M925.5 695 V709" stroke="#000"/><path d="M941 695 L948 702.0 L941 709Z" fill="url(#dith)"/><path d="M941.5 695 V709" stroke="#000"/><path d="M949 695 L956 702.0 L949 709Z" fill="url(#dith)"/><path d="M949.5 695 V709" stroke="#000"/></svg>
<div style="left:13px;top:722px;font-weight:bold;font-size:12px;line-height:15px;letter-spacing:-0.4px">Energy:</div>
<div style="left:69px;top:721px;width:68px;height:17px;box-shadow:inset 1px 1px #808080,inset -1px -1px #fff,inset 2px 2px #000"></div>
<div style="left:69px;top:722px;width:68px;text-align:center;font-weight:bold;font-size:12px;line-height:15px">106.8</div>
<div style="left:146px;top:722px;font-weight:bold;font-size:12px;line-height:15px;letter-spacing:-0.4px">Channel:</div>
<div style="left:204px;top:721px;width:60px;height:17px;box-shadow:inset 1px 1px #808080,inset -1px -1px #fff,inset 2px 2px #000"></div>
<div style="left:204px;top:722px;width:60px;text-align:center;font-weight:bold;font-size:12px;line-height:15px">850</div>
<div style="left:274px;top:722px;font-weight:bold;font-size:12px;line-height:15px;letter-spacing:-0.4px">Counts:</div>
<div style="left:324px;top:721px;width:77px;height:17px;box-shadow:inset 1px 1px #808080,inset -1px -1px #fff,inset 2px 2px #000"></div>
<div style="left:324px;top:722px;width:77px;text-align:center;font-weight:bold;font-size:12px;line-height:15px">69</div>
<div style="left:428px;top:722px;font-weight:bold;font-size:12px;line-height:15px;letter-spacing:-0.4px">ROI:</div>
<div style="left:456px;top:721px;width:157px;height:17px;box-shadow:inset 1px 1px #808080,inset -1px -1px #fff,inset 2px 2px #000"></div>
<div style="left:628px;top:722px;font-weight:bold;font-size:12px;line-height:15px">Net Integral:</div>
<div style="left:700px;top:721px;width:108px;height:17px;box-shadow:inset 1px 1px #808080,inset -1px -1px #fff,inset 2px 2px #000"></div>
<div style="left:813px;top:722px;font-weight:bold;font-size:12px;line-height:15px;letter-spacing:-0.4px">Centroid:</div>
<div style="left:881px;top:721px;width:67px;height:17px;box-shadow:inset 1px 1px #808080,inset -1px -1px #fff,inset 2px 2px #000"></div>
</body></html>
